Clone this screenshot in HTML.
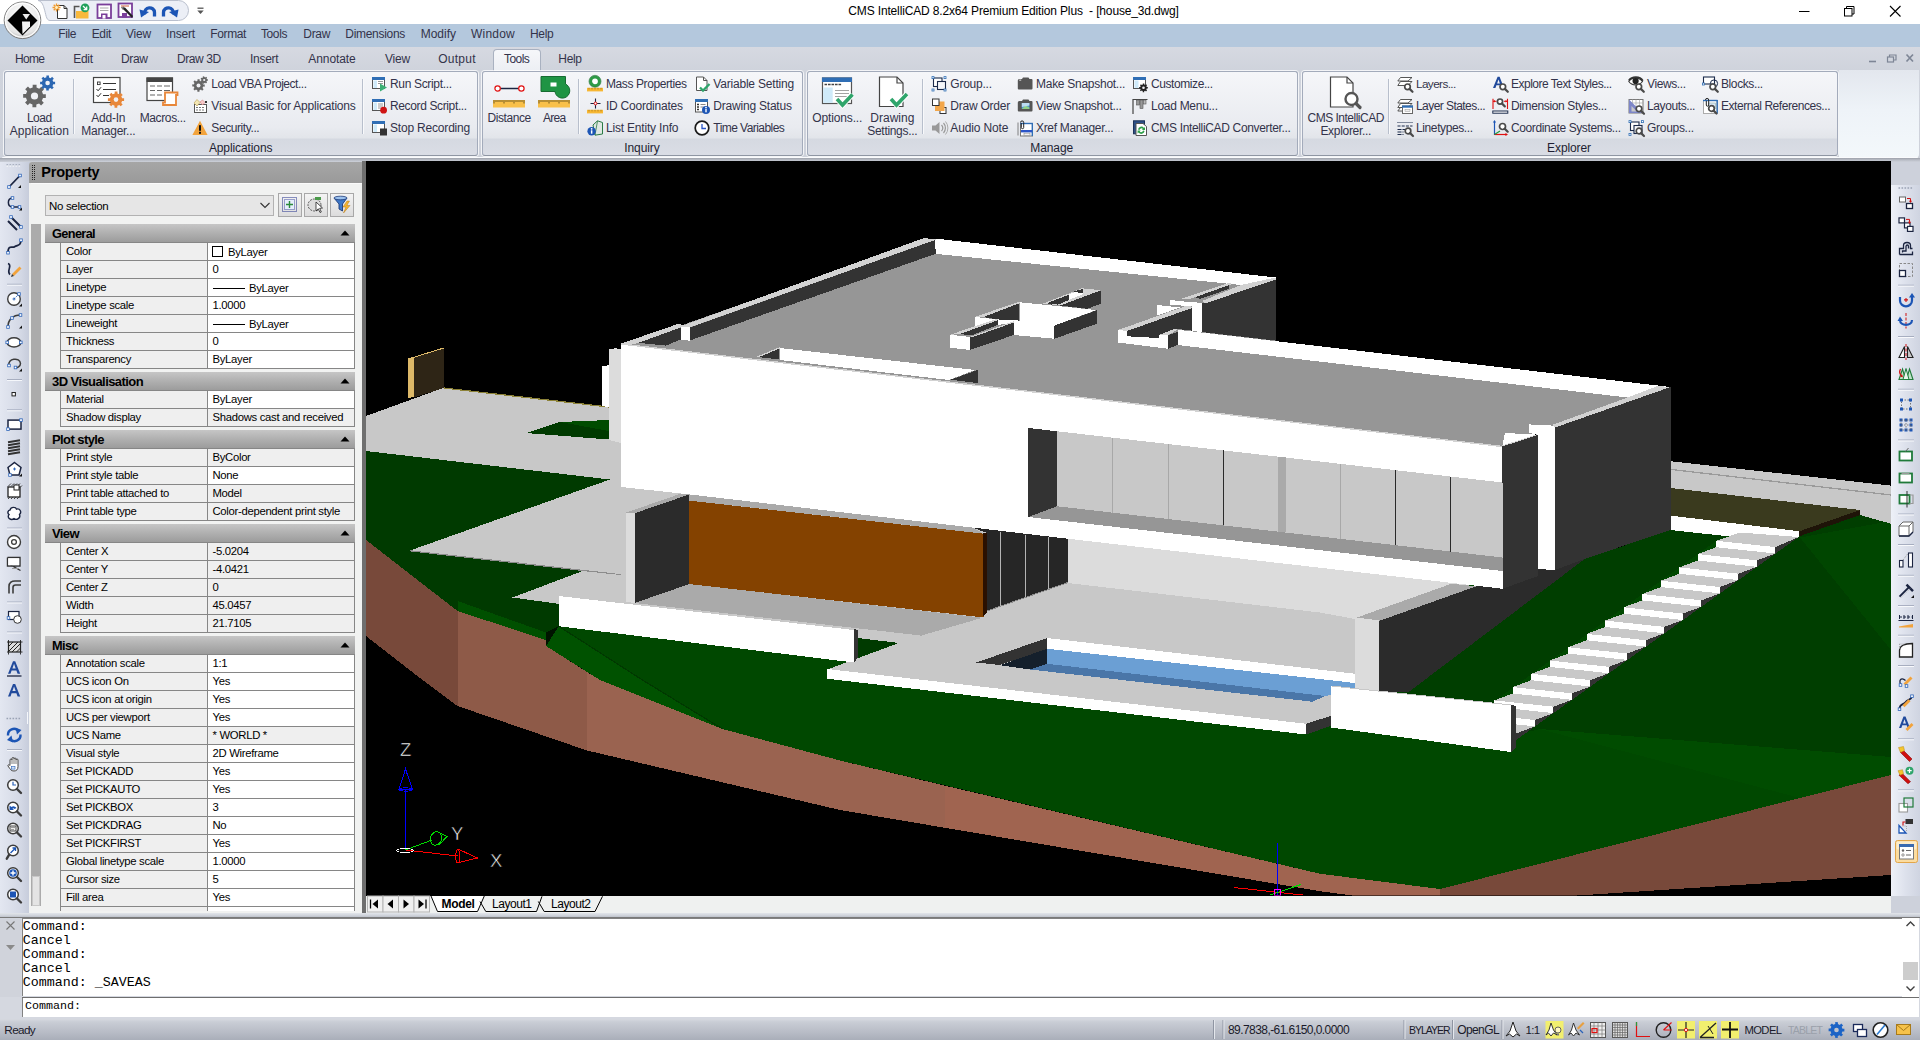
<!DOCTYPE html>
<html lang="en"><head><meta charset="utf-8"><title>CMS IntelliCAD 8.2x64 Premium Edition Plus - [house_3d.dwg]</title>
<style>
html,body{margin:0;padding:0}body{width:1920px;height:1040px;overflow:hidden;position:relative;background:#d0d4dd;font-family:"Liberation Sans",sans-serif}
body>div,body>svg,body>span{position:absolute}
div{box-sizing:content-box}
.t{white-space:pre;font-family:"Liberation Sans",sans-serif}
.b{font-weight:bold}
.m{font-family:"Liberation Mono",monospace}
.cn{font-family:"Liberation Mono",monospace}
svg{overflow:visible}
</style></head>
<body>
<div style="left:0px;top:0px;width:1920px;height:24px;background:#fff"></div>
<span class="t" style="left:848.3px;top:3.0px;font-size:12px;line-height:16px;color:#000;letter-spacing:-0.15px;">CMS IntelliCAD 8.2x64 Premium Edition Plus  - [house_3d.dwg]</span>
<div style="left:0px;top:24px;width:1920px;height:23px;background:#b4c8dd"></div>
<span class="t" style="left:58.3px;top:26.0px;font-size:12px;line-height:16px;color:#33334a;letter-spacing:-0.41px;">File</span>
<span class="t" style="left:91.7px;top:26.0px;font-size:12px;line-height:16px;color:#33334a;letter-spacing:-0.34px;">Edit</span>
<span class="t" style="left:126.0px;top:26.0px;font-size:12px;line-height:16px;color:#33334a;letter-spacing:-0.20px;">View</span>
<span class="t" style="left:166.0px;top:26.0px;font-size:12px;line-height:16px;color:#33334a;letter-spacing:-0.17px;">Insert</span>
<span class="t" style="left:210.3px;top:26.0px;font-size:12px;line-height:16px;color:#33334a;letter-spacing:-0.38px;">Format</span>
<span class="t" style="left:261.0px;top:26.0px;font-size:12px;line-height:16px;color:#33334a;letter-spacing:-0.40px;">Tools</span>
<span class="t" style="left:303.3px;top:26.0px;font-size:12px;line-height:16px;color:#33334a;letter-spacing:-0.33px;">Draw</span>
<span class="t" style="left:345.3px;top:26.0px;font-size:12px;line-height:16px;color:#33334a;letter-spacing:-0.30px;">Dimensions</span>
<span class="t" style="left:420.7px;top:26.0px;font-size:12px;line-height:16px;color:#33334a;">Modify</span>
<span class="t" style="left:471.0px;top:26.0px;font-size:12px;line-height:16px;color:#33334a;letter-spacing:0.22px;">Window</span>
<span class="t" style="left:530.0px;top:26.0px;font-size:12px;line-height:16px;color:#33334a;letter-spacing:-0.34px;">Help</span>
<div style="left:0px;top:47px;width:1920px;height:23px;background:linear-gradient(#d6d9e1,#cfd3dc)"></div>
<div style="left:0px;top:70px;width:1920px;height:92px;background:linear-gradient(#d0d4dd,#cdd1da)"></div>
<div style="left:492.5px;top:48.5px;width:48px;height:23px;background:linear-gradient(#f6f7fa,#eceef3);border:1px solid #a9b1c0;border-bottom:none;border-radius:4px 4px 0 0;box-sizing:border-box"></div>
<span class="t" style="left:15.0px;top:51.0px;font-size:12px;line-height:16px;color:#33334a;letter-spacing:-0.68px;">Home</span>
<span class="t" style="left:73.3px;top:51.0px;font-size:12px;line-height:16px;color:#33334a;letter-spacing:-0.32px;">Edit</span>
<span class="t" style="left:121.0px;top:51.0px;font-size:12px;line-height:16px;color:#33334a;letter-spacing:-0.33px;">Draw</span>
<span class="t" style="left:177.0px;top:51.0px;font-size:12px;line-height:16px;color:#33334a;letter-spacing:-0.42px;">Draw 3D</span>
<span class="t" style="left:250.0px;top:51.0px;font-size:12px;line-height:16px;color:#33334a;letter-spacing:-0.28px;">Insert</span>
<span class="t" style="left:308.3px;top:51.0px;font-size:12px;line-height:16px;color:#33334a;letter-spacing:-0.08px;">Annotate</span>
<span class="t" style="left:385.0px;top:51.0px;font-size:12px;line-height:16px;color:#33334a;letter-spacing:-0.20px;">View</span>
<span class="t" style="left:438.3px;top:51.0px;font-size:12px;line-height:16px;color:#33334a;letter-spacing:0.23px;">Output</span>
<span class="t" style="left:504.0px;top:51.0px;font-size:12px;line-height:16px;color:#33334a;letter-spacing:-0.54px;">Tools</span>
<span class="t" style="left:558.3px;top:51.0px;font-size:12px;line-height:16px;color:#33334a;letter-spacing:-0.32px;">Help</span>
<svg style="left:0;top:0" width="240" height="48" viewBox="0 0 240 48"><defs><radialGradient id="ab" cx=".5" cy=".35" r=".7"><stop offset="0" stop-color="#fff"/><stop offset=".75" stop-color="#e6e6e6"/><stop offset="1" stop-color="#9a9a9a"/></radialGradient></defs><path d="M38 0.5 H178.5 A 10 10 0 0 1 178.5 20.5 H50 C46 20.5 46 14 44 8 C43 4 41 1 38 0.5 Z" fill="#eceff6" stroke="#b9bfcd" stroke-width="1"/><circle cx="22.5" cy="20.3" r="18.3" fill="url(#ab)" stroke="#7d7d7d" stroke-width="1"/><circle cx="22.5" cy="20.3" r="17" fill="none" stroke="#fdfdfd" stroke-width="1.4" opacity=".9"/><path d="M22.5 5.5 L37.5 20.5 L22.5 35.5 L7.5 20.5 Z" fill="#000"/><path d="M22 21.5 H30 V26.5 L22.5 34 Z" fill="#f4f4f4"/><path d="M22.5 14 H30 L26.2 19.5 Z" fill="#e8e8e8"/><g transform="translate(52,3)"><path d="M5.5 2.5 H12 L15 5.5 V15.5 H5.5 Z" fill="#fff" stroke="#333" stroke-width="1"/><path d="M12 2.5V5.5H15" fill="none" stroke="#333"/><g stroke="#f29a2e" stroke-width="1.3"><path d="M4.5 0.5v8M0.5 4.5h8M1.7 1.7l5.6 5.6M7.3 1.7l-5.6 5.6"/></g><circle cx="4.5" cy="4.5" r="1.4" fill="#fff3c4"/></g><g transform="translate(73,3)"><path d="M1.5 15V3.5H6.5" fill="none" stroke="#555" stroke-width="1.6"/><path d="M3 8 H15.5 V15.5 H3 Z" fill="#f9b93c"/><circle cx="12" cy="4.8" r="4.4" fill="#1fa05a"/><path d="M10 3 L13.5 6.5 M13.7 3.6 V6.7 H10.6" stroke="#fff" stroke-width="1.3" fill="none"/></g><g transform="translate(96,3)"><rect x="1.5" y="1.5" width="13.5" height="13.5" fill="#fff" stroke="#7a3f9a" stroke-width="1.8"/><path d="M4 5h8.5M4 7.5h8.5" stroke="#aaa" stroke-width="1"/><rect x="5" y="10.5" width="6.5" height="5" fill="#7a3f9a"/><rect x="6.5" y="12" width="3" height="3.6" fill="#fff"/></g><g transform="translate(117,2)"><rect x="1.5" y="1.5" width="13.5" height="13.5" fill="#fff" stroke="#7a3f9a" stroke-width="1.8"/><path d="M4 4h8" stroke="#d0603a" stroke-width="1"/><rect x="5" y="11" width="5" height="4.6" fill="#7a3f9a"/><path d="M5 6 L13.5 14.5 L15 16 L16 14 L8 5.5 Z" fill="#222"/><path d="M4.5 5.5 L7 5 L6 7.5Z" fill="#ddd" stroke="#222" stroke-width=".6"/></g><g transform="translate(139.5,4)"><path d="M5 10.5 C4 2 15 2 15 8.5 V12.500" fill="none" stroke="#1c55b5" stroke-width="3.300"/><path d="M0 5.5 L9.5 8 L1.500 13.500 Z" fill="#1c55b5"/></g><g transform="translate(178.5,4) scale(-1,1)"><path d="M5 10.5 C4 2 15 2 15 8.5 V12.500" fill="none" stroke="#1c55b5" stroke-width="3.300"/><path d="M0 5.5 L9.5 8 L1.500 13.500 Z" fill="#1c55b5"/></g><path d="M197.5 8.2h6" stroke="#555" stroke-width="1.3"/><path d="M197.3 10.5h6.4l-3.2 3.4Z" fill="#555"/></svg>
<svg style="left:1780px;top:0" width="140" height="70" viewBox="1780 0 140 70"><path d="M1799 11.5h10.5" stroke="#000" stroke-width="1"/><rect x="1844.5" y="8.5" width="7.5" height="7.5" fill="#fff" stroke="#000" stroke-width="1"/><path d="M1846.5 8.5V6.5H1854V14H1852" fill="none" stroke="#000" stroke-width="1"/><path d="M1890 6 L1900.5 16.5 M1900.5 6 L1890 16.5" stroke="#000" stroke-width="1.1"/><path d="M1869 61.5h7" stroke="#7e8696" stroke-width="1.6"/><rect x="1887.5" y="57" width="6" height="5" fill="none" stroke="#7e8696" stroke-width="1.2"/><path d="M1889.5 57V55H1896V60H1894" fill="none" stroke="#7e8696" stroke-width="1.2"/><path d="M1906.5 54.5 L1913 61.5 M1913 54.5 L1906.5 61.5" stroke="#7e8696" stroke-width="1.7"/></svg>
<div style="left:4px;top:70.5px;width:473.5px;height:85px;box-sizing:border-box;border:1px solid #a3abbb;border-bottom-color:#8f96a3;border-radius:3px;background:linear-gradient(#f5f6f9 0,#e9ebf0 55px,#e2e5ea 66px,#d5d9e1 67px,#dadde5 100%);box-shadow:0 0 0 1px rgba(255,255,255,.75)"></div>
<span class="t" style="left:208.9px;top:139.7px;font-size:12px;line-height:16px;color:#1e1e32;letter-spacing:-0.10px;">Applications</span>
<svg style="left:23px;top:75.5px" width="32" height="33" viewBox="0 0 32 33"><polygon points="20.04,18.16 22.86,18.20 22.81,22.07 20.00,22.04 18.84,24.74 20.80,26.76 18.04,29.46 16.07,27.45 13.34,28.54 13.30,31.36 9.43,31.31 9.46,28.50 6.76,27.34 4.74,29.30 2.04,26.54 4.05,24.57 2.96,21.84 0.14,21.80 0.19,17.93 3.00,17.96 4.16,15.26 2.20,13.24 4.96,10.54 6.93,12.55 9.66,11.46 9.70,8.64 13.57,8.69 13.54,11.50 16.24,12.66 18.26,10.70 20.96,13.46 18.95,15.43" fill="#666"/><circle cx="11.5" cy="20" r="3.6" fill="#f0f1f5"/><polygon points="30.25,5.78 32.11,5.81 32.08,8.37 30.22,8.35 29.45,10.13 30.75,11.47 28.92,13.25 27.62,11.92 25.82,12.65 25.79,14.51 23.23,14.48 23.25,12.62 21.47,11.85 20.13,13.15 18.35,11.32 19.68,10.02 18.95,8.22 17.09,8.19 17.12,5.63 18.98,5.65 19.75,3.87 18.45,2.53 20.28,0.75 21.58,2.08 23.38,1.35 23.41,-0.51 25.97,-0.48 25.95,1.38 27.73,2.15 29.07,0.85 30.85,2.68 29.52,3.98" fill="#2c67b2"/><circle cx="24.6" cy="7" r="2.3" fill="#f0f1f5"/></svg>
<span class="t" style="left:26.9px;top:110.0px;font-size:12px;line-height:16px;color:#33334a;letter-spacing:-0.50px;">Load</span>
<span class="t" style="left:9.8px;top:123.0px;font-size:12px;line-height:16px;color:#33334a;letter-spacing:0.03px;">Application</span>
<div style="left:72.8px;top:79px;width:1px;height:55px;background:#b8bfcc"></div>
<div style="left:73.8px;top:79px;width:1px;height:55px;background:#f8f9fb"></div>
<svg style="left:92px;top:75.5px" width="32" height="33" viewBox="0 0 32 33"><rect x="1.5" y="1.5" width="26.5" height="25" fill="#fff" stroke="#444" stroke-width="1.2"/><rect x="5.5" y="6" width="2.6" height="2.6" fill="#fff" stroke="#333" stroke-width=".9"/><path d="M11 7.5h13M11 13.5h13M11 19.5h6" stroke="#333" stroke-width="1.1"/><path d="M4.5 13l1.6 1.8 3-3.6M4.5 19l1.6 1.8 3-3.6" fill="none" stroke="#333" stroke-width="1"/><polygon points="30.09,22.29 32.10,22.32 32.07,25.07 30.06,25.05 29.24,26.98 30.63,28.42 28.66,30.35 27.26,28.91 25.31,29.69 25.28,31.70 22.53,31.67 22.55,29.66 20.62,28.84 19.18,30.23 17.25,28.26 18.69,26.86 17.91,24.91 15.90,24.88 15.93,22.13 17.94,22.15 18.76,20.22 17.37,18.78 19.34,16.85 20.74,18.29 22.69,17.51 22.72,15.50 25.47,15.53 25.45,17.54 27.38,18.36 28.82,16.97 30.75,18.94 29.31,20.34" fill="#e8873a"/><circle cx="24" cy="23.6" r="2.3" fill="#f0f1f5"/></svg>
<span class="t" style="left:91.3px;top:110.0px;font-size:12px;line-height:16px;color:#33334a;letter-spacing:-0.23px;">Add-In</span>
<span class="t" style="left:81.3px;top:123.0px;font-size:12px;line-height:16px;color:#33334a;letter-spacing:-0.27px;">Manager...</span>
<svg style="left:146.4px;top:75.5px" width="32" height="33" viewBox="0 0 32 33"><rect x="1" y="2" width="25.5" height="22.5" fill="#fff" stroke="#444" stroke-width="1.2"/><rect x="0.5" y="1.5" width="26.5" height="4.5" fill="#444"/><path d="M4 10h5M11 10h5M18 10h6M4 14.5h5M11 14.5h5M18 14.5h6M4 19h5M11 19h5M18 19h3" stroke="#666" stroke-width="1.1"/><path d="M19 16.5 H31.5 V19 H30 V29 H17 V26.5 H19 Z" fill="#fff" stroke="#e8873a" stroke-width="1.8"/></svg>
<span class="t" style="left:139.7px;top:110.0px;font-size:12px;line-height:16px;color:#33334a;letter-spacing:-0.37px;">Macros...</span>
<svg style="left:192px;top:75.5px" width="16" height="16" viewBox="0 0 16 16"><polygon points="11.18,8.49 12.72,8.51 12.70,10.63 11.16,10.62 10.52,12.10 11.60,13.20 10.08,14.68 9.00,13.58 7.51,14.18 7.49,15.72 5.37,15.70 5.38,14.16 3.90,13.52 2.80,14.60 1.32,13.08 2.42,12.00 1.82,10.51 0.28,10.49 0.30,8.37 1.84,8.38 2.48,6.90 1.40,5.80 2.92,4.32 4.00,5.42 5.49,4.82 5.51,3.28 7.63,3.30 7.62,4.84 9.10,5.48 10.20,4.40 11.68,5.92 10.58,7.00" fill="#666"/><circle cx="6.5" cy="9.5" r="2" fill="#f0f1f5"/><polygon points="15.00,3.31 15.94,3.32 15.92,4.78 14.98,4.77 14.49,5.76 15.06,6.50 13.91,7.39 13.34,6.66 12.25,6.89 12.03,7.80 10.61,7.45 10.83,6.54 9.97,5.84 9.13,6.23 8.51,4.91 9.36,4.52 9.37,3.41 8.54,2.99 9.19,1.68 10.03,2.10 10.90,1.42 10.71,0.51 12.13,0.20 12.33,1.11 13.41,1.38 14.00,0.65 15.13,1.58 14.54,2.30" fill="#666"/><circle cx="12.2" cy="4" r="1.1" fill="#f0f1f5"/></svg>
<span class="t" style="left:211.3px;top:76.0px;font-size:12px;line-height:16px;color:#33334a;letter-spacing:-0.46px;">Load VBA Project...</span>
<svg style="left:192px;top:97.5px" width="16" height="16" viewBox="0 0 16 16"><rect x="2.5" y="6.5" width="12" height="8" fill="#fff" stroke="#555"/><path d="M4 9.5h9M4 12h9" stroke="#777" stroke-dasharray="2 1"/><path d="M2 5 L5 1.5 L8 4.5 L5 8 Z" fill="#f3e7b5" stroke="#b89b46" stroke-width=".6"/><path d="M8 4 L10.5 2 L13 4.5 L10.5 7 Z" fill="#f7c9c9" stroke="#d47d7d" stroke-width=".6"/><rect x="13" y="3" width="2" height="2" fill="#333"/></svg>
<span class="t" style="left:211.3px;top:98.0px;font-size:12px;line-height:16px;color:#33334a;letter-spacing:-0.19px;">Visual Basic for Applications</span>
<svg style="left:192px;top:119.5px" width="16" height="16" viewBox="0 0 16 16"><path d="M8 0.8 L15.6 15 L0.4 15 Z" fill="#f2a33c"/><rect x="7" y="5.2" width="2" height="5.6" fill="#111"/><rect x="7" y="11.8" width="2" height="2" fill="#111"/></svg>
<span class="t" style="left:211.3px;top:120.0px;font-size:12px;line-height:16px;color:#33334a;letter-spacing:-0.41px;">Security...</span>
<div style="left:362.2px;top:79px;width:1px;height:55px;background:#b8bfcc"></div>
<div style="left:363.2px;top:79px;width:1px;height:55px;background:#f8f9fb"></div>
<svg style="left:370.7px;top:75.5px" width="16" height="16" viewBox="0 0 16 16"><rect x="1.5" y="1.5" width="12" height="11" fill="#fff" stroke="#555" stroke-width="1"/><rect x="1" y="1" width="13" height="3" fill="#2f6eb5"/><rect x="2.5" y="4.5" width="3.5" height="7.5" fill="#cfeaf9"/><path d="M7 5.5h5M7 7.5h5" stroke="#999"/><path d="M9 7.5 L16 11.5 L9 15.5 Z" fill="#3caf74"/></svg>
<span class="t" style="left:390.0px;top:76.0px;font-size:12px;line-height:16px;color:#33334a;letter-spacing:-0.33px;">Run Script...</span>
<svg style="left:370.7px;top:97.5px" width="16" height="16" viewBox="0 0 16 16"><rect x="1.5" y="1.5" width="12" height="11" fill="#fff" stroke="#555" stroke-width="1"/><rect x="1" y="1" width="13" height="3" fill="#2f6eb5"/><rect x="2.5" y="4.5" width="3.5" height="7.5" fill="#cfeaf9"/><path d="M7 6h5M7 8h5M7 10h3" stroke="#999"/><circle cx="12.6" cy="12.2" r="3.4" fill="#cf1414"/></svg>
<span class="t" style="left:390.0px;top:98.0px;font-size:12px;line-height:16px;color:#33334a;letter-spacing:-0.37px;">Record Script...</span>
<svg style="left:370.7px;top:119.5px" width="16" height="16" viewBox="0 0 16 16"><rect x="1.5" y="1.5" width="12" height="11" fill="#fff" stroke="#555" stroke-width="1"/><rect x="1" y="1" width="13" height="3" fill="#2f6eb5"/><rect x="2.5" y="4.5" width="3.5" height="7.5" fill="#cfeaf9"/><rect x="9" y="8.5" width="7" height="7" fill="#333"/></svg>
<span class="t" style="left:390.0px;top:120.0px;font-size:12px;line-height:16px;color:#33334a;letter-spacing:-0.19px;">Stop Recording</span>
<div style="left:481.5px;top:70.5px;width:321px;height:85px;box-sizing:border-box;border:1px solid #a3abbb;border-bottom-color:#8f96a3;border-radius:3px;background:linear-gradient(#f5f6f9 0,#e9ebf0 55px,#e2e5ea 66px,#d5d9e1 67px,#dadde5 100%);box-shadow:0 0 0 1px rgba(255,255,255,.75)"></div>
<span class="t" style="left:624.3px;top:139.7px;font-size:12px;line-height:16px;color:#1e1e32;letter-spacing:-0.10px;">Inquiry</span>
<svg style="left:492.7px;top:75.5px" width="32" height="33" viewBox="0 0 32 33"><path d="M5 12.5h22" stroke="#1b2440" stroke-width="1.5"/><circle cx="4.6" cy="12.5" r="2.7" fill="#fff" stroke="#e01010" stroke-width="1.2"/><circle cx="28.4" cy="12.5" r="2.7" fill="#fff" stroke="#e01010" stroke-width="1.2"/><rect x="0" y="24" width="32" height="7.5" fill="#f9c04a"/><path d="M1 24v3.5M3 24v2M5 24v2M7 24v2M9 24v2M11 24v3.5M13 24v2M15 24v2M17 24v2M19 24v2M21 24v3.5M23 24v2M25 24v2M27 24v2M29 24v2M31 24v3.5" stroke="#3a3010" stroke-width=".7"/></svg>
<span class="t" style="left:487.4px;top:110.0px;font-size:12px;line-height:16px;color:#33334a;letter-spacing:-0.42px;">Distance</span>
<svg style="left:538px;top:75.5px" width="32" height="33" viewBox="0 0 32 33"><path d="M3 0.5 H27.5 V8 A7.4 7.4 0 1 1 17 15.5 H3 Z" fill="#1f9444" stroke="#166b31" stroke-width="1"/><rect x="12.5" y="6.5" width="6" height="4" fill="#fff"/><rect x="0" y="24" width="32" height="7.5" fill="#f9c04a"/><path d="M1 24v3.5M3 24v2M5 24v2M7 24v2M9 24v2M11 24v3.5M13 24v2M15 24v2M17 24v2M19 24v2M21 24v3.5M23 24v2M25 24v2M27 24v2M29 24v2M31 24v3.5" stroke="#3a3010" stroke-width=".7"/></svg>
<span class="t" style="left:543.1px;top:110.0px;font-size:12px;line-height:16px;color:#33334a;letter-spacing:-0.76px;">Area</span>
<div style="left:577.8px;top:79px;width:1px;height:55px;background:#b8bfcc"></div>
<div style="left:578.8px;top:79px;width:1px;height:55px;background:#f8f9fb"></div>
<svg style="left:587px;top:75.5px" width="16" height="16" viewBox="0 0 16 16"><circle cx="8" cy="5.3" r="4.4" fill="#fff" stroke="#2e9a46" stroke-width="3"/><circle cx="8" cy="5.3" r="6" fill="none" stroke="#1f6e32" stroke-width=".6"/><rect x="0" y="11.8" width="16" height="3.6" fill="#f7b733"/><path d="M2 11.8v1.6M5 11.8v1.6M8 11.8v1.6M11 11.8v1.6M14 11.8v1.6" stroke="#8a6514" stroke-width=".6"/></svg>
<span class="t" style="left:606.0px;top:76.0px;font-size:12px;line-height:16px;color:#33334a;letter-spacing:-0.40px;">Mass Properties</span>
<svg style="left:587px;top:97.5px" width="16" height="16" viewBox="0 0 16 16"><path d="M8.5 0.5v10M3.5 5.5h10" stroke="#1b2440" stroke-width="1.1"/><circle cx="8.5" cy="5.5" r="1.4" fill="#fff" stroke="#e01010"/><rect x="0" y="11.8" width="16" height="3.6" fill="#f7b733"/><path d="M2 11.8v1.6M5 11.8v1.6M8 11.8v1.6M11 11.8v1.6M14 11.8v1.6" stroke="#8a6514" stroke-width=".6"/></svg>
<span class="t" style="left:606.0px;top:98.0px;font-size:12px;line-height:16px;color:#33334a;letter-spacing:-0.24px;">ID Coordinates</span>
<svg style="left:587px;top:119.5px" width="16" height="16" viewBox="0 0 16 16"><path d="M6 5 L10.5 0.8 L15.5 2.5 L15.5 14 L8 15.2 Z" fill="#dfe8e2" stroke="#2b7a45" stroke-width="1"/><path d="M10.5 1 L8 15" stroke="#2b7a45" stroke-width=".8"/><circle cx="4.6" cy="11.3" r="4.2" fill="#1c55b5"/><rect x="3.9" y="10.3" width="1.5" height="3.4" fill="#fff"/><circle cx="4.65" cy="8.8" r=".9" fill="#fff"/></svg>
<span class="t" style="left:606.0px;top:120.0px;font-size:12px;line-height:16px;color:#33334a;letter-spacing:-0.19px;">List Entity Info</span>
<svg style="left:694px;top:75.5px" width="16" height="16" viewBox="0 0 16 16"><path d="M2.5 1 H9.5 L13 4.5 V14.5 H2.5 Z" fill="#fff" stroke="#555"/><path d="M9.5 1 V4.5 H13" fill="none" stroke="#555"/><path d="M6 11.5 L9 14.5 L15.5 8" fill="none" stroke="#2fa56b" stroke-width="2.3"/></svg>
<span class="t" style="left:713.3px;top:76.0px;font-size:12px;line-height:16px;color:#33334a;letter-spacing:-0.20px;">Variable Setting</span>
<svg style="left:694px;top:97.5px" width="16" height="16" viewBox="0 0 16 16"><rect x="1.5" y="1.5" width="12" height="12.5" fill="#fff" stroke="#555"/><rect x="1" y="1" width="13" height="3" fill="#2f6eb5"/><path d="M3 6.5h2M3 9h2M3 11.5h2" stroke="#333" stroke-width="1.3"/><path d="M6.5 6.5h5M6.5 9h3" stroke="#888"/><circle cx="12" cy="12" r="4" fill="#1c55b5"/><rect x="11.3" y="11" width="1.4" height="3.3" fill="#fff"/><circle cx="12" cy="9.6" r=".9" fill="#fff"/></svg>
<span class="t" style="left:713.3px;top:98.0px;font-size:12px;line-height:16px;color:#33334a;letter-spacing:-0.21px;">Drawing Status</span>
<svg style="left:694px;top:119.5px" width="16" height="16" viewBox="0 0 16 16"><circle cx="8" cy="8" r="6.8" fill="#fff" stroke="#1a1a1a" stroke-width="1.7"/><path d="M8 4v4.5h4" fill="none" stroke="#2a56c6" stroke-width="1.3"/></svg>
<span class="t" style="left:713.3px;top:120.0px;font-size:12px;line-height:16px;color:#33334a;letter-spacing:-0.55px;">Time Variables</span>
<div style="left:806.5px;top:70.5px;width:491px;height:85px;box-sizing:border-box;border:1px solid #a3abbb;border-bottom-color:#8f96a3;border-radius:3px;background:linear-gradient(#f5f6f9 0,#e9ebf0 55px,#e2e5ea 66px,#d5d9e1 67px,#dadde5 100%);box-shadow:0 0 0 1px rgba(255,255,255,.75)"></div>
<span class="t" style="left:1030.3px;top:139.7px;font-size:12px;line-height:16px;color:#1e1e32;letter-spacing:-0.10px;">Manage</span>
<svg style="left:821px;top:75.5px" width="32" height="33" viewBox="0 0 32 33"><rect x="1.5" y="2" width="29" height="25.5" fill="#fff" stroke="#555" stroke-width="1.2"/><rect x="1" y="1.5" width="30" height="4.5" fill="#2f6eb5"/><path d="M3.5 8.5h2.6M7 8.5h2.6M10.5 8.5h2.6M14 8.5h2.6M17.5 8.5h2.6" stroke="#444" stroke-width="1.6"/><rect x="2.2" y="11.5" width="9.5" height="15.4" fill="#cfeaf9"/><path d="M14 14.5h14M14 17.5h14M14 20.5h14" stroke="#999" stroke-width=".9"/><path d="M16 23 L21.5 29 L31.5 18.5" fill="none" stroke="#fff" stroke-width="5.5"/><path d="M16 23 L21.5 29 L31.5 18.5" fill="none" stroke="#2fa56b" stroke-width="3.6"/></svg>
<span class="t" style="left:812.3px;top:110.0px;font-size:12px;line-height:16px;color:#33334a;letter-spacing:-0.14px;">Options...</span>
<svg style="left:876px;top:75.5px" width="32" height="33" viewBox="0 0 32 33"><path d="M3.5 1 H21 L27 7 V30.5 H3.5 Z" fill="#fff" stroke="#444" stroke-width="1.2"/><path d="M21 1 V7 H27" fill="none" stroke="#444" stroke-width="1.2"/><path d="M15 23 L20.5 29 L31 18" fill="none" stroke="#fff" stroke-width="5.5"/><path d="M15 23 L20.5 29 L31 18" fill="none" stroke="#2fa56b" stroke-width="3.6"/></svg>
<span class="t" style="left:870.3px;top:110.0px;font-size:12px;line-height:16px;color:#33334a;">Drawing</span>
<span class="t" style="left:867.3px;top:123.0px;font-size:12px;line-height:16px;color:#33334a;letter-spacing:-0.31px;">Settings...</span>
<div style="left:922.2px;top:79px;width:1px;height:55px;background:#b8bfcc"></div>
<div style="left:923.2px;top:79px;width:1px;height:55px;background:#f8f9fb"></div>
<svg style="left:931px;top:75.5px" width="16" height="16" viewBox="0 0 16 16"><rect x="2.5" y="2" width="8.5" height="8.5" fill="#fff" stroke="#1b2a4a" stroke-width="1.1"/><rect x="6.5" y="5.5" width="8" height="8" fill="#f4f6fa" stroke="#1b2a4a" stroke-width="1.1"/><g fill="#fff" stroke="#2f6eb5" stroke-width=".8"><rect x="1" y="0.6" width="2" height="2"/><rect x="13" y="0.6" width="2" height="2"/><rect x="1" y="13" width="2" height="2"/><rect x="13" y="13" width="2" height="2"/></g></svg>
<span class="t" style="left:950.3px;top:76.0px;font-size:12px;line-height:16px;color:#33334a;letter-spacing:-0.24px;">Group...</span>
<svg style="left:931px;top:97.5px" width="16" height="16" viewBox="0 0 16 16"><rect x="9" y="9.5" width="6" height="6" fill="#fff" stroke="#333"/><rect x="4" y="3.5" width="9.5" height="9.5" fill="#f2a64a"/><rect x="1.5" y="1" width="6.5" height="6.5" fill="#fff" stroke="#333"/></svg>
<span class="t" style="left:950.3px;top:98.0px;font-size:12px;line-height:16px;color:#33334a;letter-spacing:-0.23px;">Draw Order</span>
<svg style="left:931px;top:119.5px" width="16" height="16" viewBox="0 0 16 16"><path d="M1 5.5h3.5L8.5 2v12L4.5 10.5H1Z" fill="#999"/><path d="M10.5 5a4.5 4.5 0 0 1 0 6M12.5 3a7.5 7.5 0 0 1 0 10" fill="none" stroke="#999" stroke-width="1.2"/><path d="M14.5 1.5a10 10 0 0 1 0 13" fill="none" stroke="#aaa" stroke-width="1"/></svg>
<span class="t" style="left:950.3px;top:120.0px;font-size:12px;line-height:16px;color:#33334a;letter-spacing:-0.14px;">Audio Note</span>
<svg style="left:1017px;top:75.5px" width="16" height="16" viewBox="0 0 16 16"><path d="M0.8 4.5 a1.5 1.5 0 0 1 1.5 -1.5 H5 L6 1.5 H11.5 L12.5 3 H14.5 a1 1 0 0 1 1 1 V12.5 a1 1 0 0 1 -1 1 H1.8 a1 1 0 0 1 -1 -1 Z" fill="#555"/><rect x="2.2" y="3.6" width="2" height="1" fill="#e8e8e8"/></svg>
<span class="t" style="left:1036.0px;top:76.0px;font-size:12px;line-height:16px;color:#33334a;letter-spacing:-0.27px;">Make Snapshot...</span>
<svg style="left:1017px;top:97.5px" width="16" height="16" viewBox="0 0 16 16"><path d="M0.8 4.5 a1.5 1.5 0 0 1 1.5 -1.5 H5 L6 1.5 H11.5 L12.5 3 H14.5 a1 1 0 0 1 1 1 V12.5 a1 1 0 0 1 -1 1 H1.8 a1 1 0 0 1 -1 -1 Z" fill="#555"/><rect x="4.8" y="5" width="7.6" height="6" fill="#4c9bd6"/><path d="M4.8 11 L8.5 7.5 L12.4 9.5 V11Z" fill="#8fd08a"/><path d="M4.8 5h7.6v2.5L4.8 9Z" fill="#d7ecfa" opacity=".8"/></svg>
<span class="t" style="left:1036.0px;top:98.0px;font-size:12px;line-height:16px;color:#33334a;letter-spacing:-0.26px;">View Snapshot...</span>
<svg style="left:1017px;top:119.5px" width="16" height="16" viewBox="0 0 16 16"><rect x="3.5" y="3.5" width="12" height="12.5" fill="#fff" stroke="#777"/><path d="M3 3.5h13" stroke="#2f6eb5" stroke-width="1.4"/><path d="M15.3 3v13" stroke="#2f6eb5" stroke-width="1.4"/><rect x="4" y="10" width="11" height="2.4" fill="#2b55c8"/><rect x="7" y="13.2" width="6" height="2" fill="#fff" stroke="#888" stroke-width=".6"/><path d="M3.5 2.5 a1.6 1.6 0 0 1 3.2 0 V7.5 a1.2 1.2 0 0 1 -2.4 0 V3" fill="none" stroke="#222" stroke-width="1"/><path d="M1 2.5v13" stroke="#666" stroke-width=".8"/></svg>
<span class="t" style="left:1036.0px;top:120.0px;font-size:12px;line-height:16px;color:#33334a;letter-spacing:-0.32px;">Xref Manager...</span>
<svg style="left:1131.5px;top:75.5px" width="16" height="16" viewBox="0 0 16 16"><rect x="1.5" y="1.5" width="12" height="11" fill="#fff" stroke="#555"/><rect x="1" y="1" width="13" height="3" fill="#2f6eb5"/><rect x="2.5" y="4.5" width="4" height="7.5" fill="#cfeaf9"/><polygon points="14.77,11.10 15.85,11.11 15.83,12.59 14.75,12.58 14.31,13.61 15.06,14.39 14.00,15.42 13.25,14.65 12.20,15.07 12.19,16.15 10.71,16.13 10.72,15.05 9.69,14.61 8.91,15.36 7.88,14.30 8.65,13.55 8.23,12.50 7.15,12.49 7.17,11.01 8.25,11.02 8.69,9.99 7.94,9.21 9.00,8.18 9.75,8.95 10.80,8.53 10.81,7.45 12.29,7.47 12.28,8.55 13.31,8.99 14.09,8.24 15.12,9.30 14.35,10.05" fill="#222"/><circle cx="11.5" cy="11.8" r="1.3" fill="#f0f1f5"/></svg>
<span class="t" style="left:1151.0px;top:76.0px;font-size:12px;line-height:16px;color:#33334a;letter-spacing:-0.42px;">Customize...</span>
<svg style="left:1131.5px;top:97.5px" width="16" height="16" viewBox="0 0 16 16"><path d="M1 16V1.5H15.5" fill="none" stroke="#444" stroke-width="1.2"/><rect x="4.5" y="2" width="3" height="5" fill="#999" stroke="#555" stroke-width=".6"/><rect x="8" y="2" width="3" height="8.5" fill="#999" stroke="#555" stroke-width=".6"/><rect x="11.5" y="2" width="2.5" height="4" fill="#bbb" stroke="#555" stroke-width=".6"/></svg>
<span class="t" style="left:1151.0px;top:98.0px;font-size:12px;line-height:16px;color:#33334a;letter-spacing:-0.28px;">Load Menu...</span>
<svg style="left:1131.5px;top:119.5px" width="16" height="16" viewBox="0 0 16 16"><rect x="1.5" y="0.8" width="11" height="13" fill="#2d4f86" stroke="#1d3358"/><path d="M4 3.5 H11 L14.5 6.5 V15.5 H4 Z" fill="#fff" stroke="#555"/><path d="M6 9.5 a3.4 3.4 0 0 1 6 -1.6 l1 -1 v3.2 h-3.2 l1.1 -1.1 a2 2 0 0 0 -3.4 .9Z" fill="#2fa04a"/><path d="M12.6 11 a3.4 3.4 0 0 1 -6 1.6 l-1 1 v-3.2 h3.2 l-1.1 1.1 a2 2 0 0 0 3.4 -.9Z" fill="#2fa04a"/></svg>
<span class="t" style="left:1151.0px;top:120.0px;font-size:12px;line-height:16px;color:#33334a;letter-spacing:-0.34px;">CMS IntelliCAD Converter...</span>
<div style="left:1301.5px;top:70.5px;width:536px;height:85px;box-sizing:border-box;border:1px solid #a3abbb;border-bottom-color:#8f96a3;border-radius:3px;background:linear-gradient(#f5f6f9 0,#e9ebf0 55px,#e2e5ea 66px,#d5d9e1 67px,#dadde5 100%);box-shadow:0 0 0 1px rgba(255,255,255,.75)"></div>
<span class="t" style="left:1547.1px;top:139.7px;font-size:12px;line-height:16px;color:#1e1e32;letter-spacing:-0.10px;">Explorer</span>
<svg style="left:1329.4px;top:75.5px" width="32" height="33" viewBox="0 0 32 33"><path d="M1.5 1 H18 L24 7 V31 H1.5 Z" fill="#fff" stroke="#444" stroke-width="1.2"/><path d="M18 1 V7 H24" fill="none" stroke="#444" stroke-width="1.2"/><circle cx="22.5" cy="23" r="6" fill="#fff" stroke="#555" stroke-width="2.4"/><path d="M27 27.5 L31 31.5" stroke="#555" stroke-width="3.2" stroke-linecap="round"/></svg>
<span class="t" style="left:1307.5px;top:110.0px;font-size:12px;line-height:16px;color:#33334a;letter-spacing:-0.50px;">CMS IntelliCAD</span>
<span class="t" style="left:1320.4px;top:123.0px;font-size:12px;line-height:16px;color:#33334a;letter-spacing:-0.30px;">Explorer...</span>
<div style="left:1387.8px;top:79px;width:1px;height:55px;background:#b8bfcc"></div>
<div style="left:1388.8px;top:79px;width:1px;height:55px;background:#f8f9fb"></div>
<svg style="left:1397px;top:75.5px" width="16" height="16" viewBox="0 0 16 16"><path d="M3.5 1.5 H15 L11 5 H0.8 Z" fill="#fff" stroke="#444" stroke-width=".9"/><path d="M3.5 5.5 H15 L11 9.5 H0.8 Z" fill="#fff" stroke="#444" stroke-width=".9"/><circle cx="10.5" cy="10.8" r="2.8" fill="#fff" stroke="#4a4a4a" stroke-width="1.7"/><path d="M12.6 12.9 L15.5 15.8" stroke="#4a4a4a" stroke-width="2.2" stroke-linecap="round"/></svg>
<span class="t" style="left:1416.0px;top:76.0px;font-size:11.75px;line-height:16px;color:#33334a;letter-spacing:-0.60px;">Layers...</span>
<svg style="left:1397px;top:97.5px" width="16" height="16" viewBox="0 0 16 16"><path d="M3.5 1.5 H15 L11 5 H0.8 Z" fill="#fff" stroke="#444" stroke-width=".9"/><path d="M3.5 5.5 H15 L11 9.5 H0.8 Z" fill="#fff" stroke="#444" stroke-width=".9"/><path d="M3.5 9.5 H8 L6 13 H0.8 Z" fill="#fff" stroke="#444" stroke-width=".9"/><rect x="5.5" y="8" width="10" height="7.5" fill="#fff" stroke="#666"/><rect x="5" y="7.5" width="11" height="2.2" fill="#2f6eb5"/><rect x="8" y="11.3" width="5" height="2.2" fill="#eee" stroke="#999" stroke-width=".5"/></svg>
<span class="t" style="left:1416.0px;top:98.0px;font-size:12px;line-height:16px;color:#33334a;letter-spacing:-0.56px;">Layer States...</span>
<svg style="left:1397px;top:119.5px" width="16" height="16" viewBox="0 0 16 16"><path d="M0.5 2.5h15" stroke="#1b2a4a" stroke-width="1" stroke-dasharray="1 1"/><path d="M0.5 6h15" stroke="#1b2a4a" stroke-width="1.1" stroke-dasharray="3 1.2"/><path d="M0.5 9.5h8M0.5 12h6M0.5 14.5h6" stroke="#1b2a4a" stroke-width="1.1" stroke-dasharray="4 1"/><circle cx="11" cy="11" r="2.8" fill="#fff" stroke="#4a4a4a" stroke-width="1.7"/><path d="M13.1 13.1 L16 16" stroke="#4a4a4a" stroke-width="2.2" stroke-linecap="round"/></svg>
<span class="t" style="left:1416.0px;top:120.0px;font-size:12px;line-height:16px;color:#33334a;letter-spacing:-0.39px;">Linetypes...</span>
<svg style="left:1492.3px;top:75.5px" width="16" height="16" viewBox="0 0 16 16"><path d="M1 12 L5.6 0.8 H7.6 L12 12 H9.6 L8.6 9.2 H4.4 L3.4 12 Z M5.1 7.4 H7.9 L6.5 3.4 Z" fill="#214a9c"/><circle cx="10.8" cy="10.8" r="2.8" fill="#fff" stroke="#4a4a4a" stroke-width="1.7"/><path d="M12.9 12.9 L15.8 15.8" stroke="#4a4a4a" stroke-width="2.2" stroke-linecap="round"/></svg>
<span class="t" style="left:1511.0px;top:76.0px;font-size:12px;line-height:16px;color:#33334a;letter-spacing:-0.51px;">Explore Text Styles...</span>
<svg style="left:1492.3px;top:97.5px" width="16" height="16" viewBox="0 0 16 16"><path d="M1 0.8V11M15.5 0.8V11" stroke="#e01010" stroke-width="1.1"/><path d="M1 3.3h3.5M12 3.3h3.5" stroke="#e01010"/><path d="M1 3.3l2 -1.2v2.4ZM15.5 3.3l-2 -1.2v2.4Z" fill="#e01010"/><rect x="0.8" y="13" width="15" height="2.2" fill="#fff" stroke="#1b2a4a" stroke-width="1"/><circle cx="8" cy="3.6" r="2.6" fill="#fff" stroke="#4a4a4a" stroke-width="1.7"/><path d="M9.95 5.55 L12.8 8.4" stroke="#4a4a4a" stroke-width="2.2" stroke-linecap="round"/></svg>
<span class="t" style="left:1511.0px;top:98.0px;font-size:12px;line-height:16px;color:#33334a;letter-spacing:-0.37px;">Dimension Styles...</span>
<svg style="left:1492.3px;top:119.5px" width="16" height="16" viewBox="0 0 16 16"><path d="M2.5 15V1.5" stroke="#1c55b5" stroke-width="1.2"/><path d="M2.5 0l1.6 2.6h-3.2Z" fill="#1c55b5"/><path d="M2.5 14.5H15" stroke="#e01010" stroke-width="1.2"/><path d="M16 14.5l-2.6 1.6v-3.2Z" fill="#e01010"/><path d="M2.5 14.5L8 11" stroke="#1f9a3c" stroke-width="1.2"/><circle cx="10.5" cy="6.5" r="3" fill="#fff" stroke="#4a4a4a" stroke-width="1.7"/><path d="M12.75 8.75 L15.7 11.7" stroke="#4a4a4a" stroke-width="2.2" stroke-linecap="round"/></svg>
<span class="t" style="left:1511.0px;top:120.0px;font-size:12px;line-height:16px;color:#33334a;letter-spacing:-0.40px;">Coordinate Systems...</span>
<svg style="left:1628px;top:75.5px" width="16" height="16" viewBox="0 0 16 16"><path d="M0.8 5.5 C3 1.5 11 0.5 14.5 5.5 C11 10 4 10 0.8 5.5 Z" fill="#fff" stroke="#333" stroke-width="1.1"/><circle cx="7.6" cy="5" r="3.1" fill="#222"/><path d="M0.8 4.5 C4 0 12 0 14.8 4.8" fill="none" stroke="#333" stroke-width="1.8"/><circle cx="10.8" cy="10.8" r="2.8" fill="#fff" stroke="#4a4a4a" stroke-width="1.7"/><path d="M12.9 12.9 L15.8 15.8" stroke="#4a4a4a" stroke-width="2.2" stroke-linecap="round"/></svg>
<span class="t" style="left:1647.0px;top:76.0px;font-size:12px;line-height:16px;color:#33334a;letter-spacing:-0.39px;">Views...</span>
<svg style="left:1628px;top:97.5px" width="16" height="16" viewBox="0 0 16 16"><rect x="1" y="1.5" width="14" height="13.5" fill="#fff" stroke="#777"/><path d="M4.5 1.5v13M8 1.5v13M11.5 1.5v13M1 5h14M1 8.5h14" stroke="#aaa" stroke-width=".7"/><path d="M1 1.5 L14.5 15 H1 Z" fill="#7d86c8"/><path d="M3.5 8 L9 13.5 H3.5 Z" fill="#c8c8c8"/><circle cx="11" cy="10.8" r="2.8" fill="#fff" stroke="#4a4a4a" stroke-width="1.7"/><path d="M13.1 12.9 L16 15.8" stroke="#4a4a4a" stroke-width="2.2" stroke-linecap="round"/></svg>
<span class="t" style="left:1647.0px;top:98.0px;font-size:12px;line-height:16px;color:#33334a;letter-spacing:-0.40px;">Layouts...</span>
<svg style="left:1628px;top:119.5px" width="16" height="16" viewBox="0 0 16 16"><rect x="2.5" y="2" width="8.5" height="8.5" fill="#fff" stroke="#1b2a4a" stroke-width="1.1"/><rect x="6" y="5.5" width="8" height="8" fill="#f4f6fa" stroke="#1b2a4a" stroke-width="1.1"/><g fill="#fff" stroke="#2f6eb5" stroke-width=".8"><rect x="1" y="0.6" width="2" height="2"/><rect x="13.5" y="0.6" width="2" height="2"/><rect x="1" y="13.5" width="2" height="2"/></g><circle cx="11" cy="11" r="2.8" fill="#fff" stroke="#4a4a4a" stroke-width="1.7"/><path d="M13.1 13.1 L16 16" stroke="#4a4a4a" stroke-width="2.2" stroke-linecap="round"/></svg>
<span class="t" style="left:1647.0px;top:120.0px;font-size:12px;line-height:16px;color:#33334a;letter-spacing:-0.29px;">Groups...</span>
<svg style="left:1702.3px;top:75.5px" width="16" height="16" viewBox="0 0 16 16"><rect x="1.5" y="1" width="11" height="7" fill="#fff" stroke="#1b2a4a" stroke-width="1.1"/><circle cx="12" cy="7.5" r="3.6" fill="none" stroke="#1b2a4a" stroke-width="1"/><rect x="0.5" y="7" width="2" height="2" fill="#fff" stroke="#2f6eb5" stroke-width=".8"/><circle cx="10.8" cy="10.8" r="2.8" fill="#fff" stroke="#4a4a4a" stroke-width="1.7"/><path d="M12.9 12.9 L15.8 15.8" stroke="#4a4a4a" stroke-width="2.2" stroke-linecap="round"/></svg>
<span class="t" style="left:1721.0px;top:76.0px;font-size:12px;line-height:16px;color:#33334a;letter-spacing:-0.40px;">Blocks...</span>
<svg style="left:1702.3px;top:97.5px" width="16" height="16" viewBox="0 0 16 16"><rect x="1.5" y="2.5" width="13.5" height="13" fill="#fff" stroke="#999" stroke-width=".8"/><path d="M1 2.5h14.5" stroke="#2f6eb5" stroke-width="1.4"/><path d="M15.2 2v13.5" stroke="#2f6eb5" stroke-width="1.4"/><rect x="6.5" y="5" width="7" height="6" fill="#dbe9f7" stroke="#8aa" stroke-width=".6"/><path d="M3.5 2 a1.6 1.6 0 0 1 3.2 0 V7 a1.2 1.2 0 0 1 -2.4 0 V2.8" fill="none" stroke="#222" stroke-width="1"/><circle cx="9.5" cy="10.5" r="2.8" fill="#fff" stroke="#4a4a4a" stroke-width="1.7"/><path d="M11.6 12.6 L14.5 15.5" stroke="#4a4a4a" stroke-width="2.2" stroke-linecap="round"/></svg>
<span class="t" style="left:1721.0px;top:98.0px;font-size:12px;line-height:16px;color:#33334a;letter-spacing:-0.44px;">External References...</span>
<div style="left:1839px;top:70px;width:79.5px;height:88px;background:linear-gradient(#e3e7ee,#eef3f8 45%,#f3f8fb);border-radius:0 0 4px 0"></div>
<div style="left:2px;top:156.5px;width:1916px;height:1.5px;background:#fafbfd;border-radius:0 0 3px 3px"></div>
<div style="left:0px;top:158px;width:1920px;height:3.5px;background:linear-gradient(#9da1aa,#b4b8c1 40%,#cdd1da)"></div>
<div style="left:0px;top:162px;width:30px;height:752px;background:linear-gradient(90deg,#e3e7f1,#d3d8e5 70%,#c5cbda)"></div>
<svg style="left:0;top:160px" width="30" height="752" viewBox="0 160 30 752"><path d="M6.5 164.8h1.6M9.5 164.8h1.6M12.5 164.8h1.6M15.5 164.8h1.6M18.5 164.8h1.6" stroke="#9aa2b4" stroke-width="1.3"/><path d="M6.5 166h1.6M9.5 166h1.6M12.5 166h1.6M15.5 166h1.6M18.5 166h1.6" stroke="#fff" stroke-width="1"/><g transform="translate(6,173)"><path d="M3 14 L14 2.5" stroke="#1b2440" stroke-width="1.8"/><rect x="1.7" y="12.7" width="2.6" height="2.6" fill="#fff" stroke="#2a62b8" stroke-width=".8"/><rect x="12.7" y="1.2" width="2.6" height="2.6" fill="#fff" stroke="#2a62b8" stroke-width=".8"/><path d="M15 15 v-3 l-3 3 z" fill="#111"/></g><g transform="translate(6,195.5)"><path d="M6.5 2.5 C1 3 1 11 6.5 11.5 H13.5" fill="none" stroke="#1b2440" stroke-width="1.5"/><rect x="5.2" y="1.2" width="2.6" height="2.6" fill="#fff" stroke="#2a62b8" stroke-width=".8"/><rect x="5.2" y="10.2" width="2.6" height="2.6" fill="#fff" stroke="#2a62b8" stroke-width=".8"/><rect x="12.2" y="10.2" width="2.6" height="2.6" fill="#fff" stroke="#2a62b8" stroke-width=".8"/><path d="M16 15 v-3 l-3 3 z" fill="#111"/></g><g transform="translate(6,215.5)"><path d="M2 5.5 L11 14.5 M5.5 2 L14.5 11" stroke="#1b2440" stroke-width="2"/><rect x="3.7" y="0.2" width="2.6" height="2.6" fill="#fff" stroke="#2a62b8" stroke-width=".8"/><rect x="13.7" y="10.2" width="2.6" height="2.6" fill="#fff" stroke="#2a62b8" stroke-width=".8"/></g><g transform="translate(6,238.2)"><path d="M2 14.5 C2 6 6.5 10 8.5 8.5 C12 6.5 14.5 8 15 2" fill="none" stroke="#1b2440" stroke-width="1.8"/><rect x="0.7" y="13.2" width="2.6" height="2.6" fill="#fff" stroke="#2a62b8" stroke-width=".8"/><rect x="13.7" y="0.7" width="2.6" height="2.6" fill="#fff" stroke="#2a62b8" stroke-width=".8"/></g><g transform="translate(6,261)"><path d="M2 2.5 C7 4 0 10 4 13.5" fill="none" stroke="#1b2440" stroke-width="1.7"/><path d="M6 13 L13.5 5.5 L15.5 7.5 L8 15 Z" fill="#f2a33c"/><path d="M6 13 L5 16 L8 15Z" fill="#333"/></g><path d="M7 284.25h15" stroke="#a7aec0" stroke-width="1"/><path d="M7 285.25h15" stroke="#f5f7fb" stroke-width="1"/><g transform="translate(6,290.5)"><circle cx="8" cy="8.5" r="6.3" fill="#fff" stroke="#3c3c3c" stroke-width="1.4"/><path d="M8 8.5 L13 3.5" stroke="#2a62b8" stroke-width=".9" stroke-dasharray="1.5 1"/><path d="M8 7v3M6.5 8.5h3" stroke="#2a62b8" stroke-width=".9"/><rect x="11.7" y="2.2" width="2.6" height="2.6" fill="#fff" stroke="#2a62b8" stroke-width=".8"/><path d="M16 16 v-3 l-3 3 z" fill="#111"/></g><g transform="translate(6,312.5)"><path d="M2 14.5 C2 7 7 2.5 14.5 2.5" fill="none" stroke="#3c3c3c" stroke-width="1.6"/><rect x="0.7" y="13.2" width="2.6" height="2.6" fill="#fff" stroke="#2a62b8" stroke-width=".8"/><rect x="13.2" y="1.2" width="2.6" height="2.6" fill="#fff" stroke="#2a62b8" stroke-width=".8"/><rect x="4.7" y="4.2" width="2.6" height="2.6" fill="#fff" stroke="#2a62b8" stroke-width=".8"/><path d="M16 16 v-3 l-3 3 z" fill="#111"/></g><g transform="translate(6,333.9)"><ellipse cx="8" cy="8.5" rx="6.8" ry="4.6" fill="#fff" stroke="#3c3c3c" stroke-width="1.5"/><rect x="-0.1" y="7.2" width="2.6" height="2.6" fill="#fff" stroke="#2a62b8" stroke-width=".8"/><rect x="13.5" y="7.2" width="2.6" height="2.6" fill="#fff" stroke="#2a62b8" stroke-width=".8"/></g><g transform="translate(6,355.5)"><path d="M3 10 C1 3 14 1 14.5 8 C14.5 11 11 12.5 9.5 12" fill="none" stroke="#3c3c3c" stroke-width="1.5"/><rect x="1.7" y="8.7" width="2.6" height="2.6" fill="#fff" stroke="#2a62b8" stroke-width=".8"/><rect x="8.2" y="10.7" width="2.6" height="2.6" fill="#fff" stroke="#2a62b8" stroke-width=".8"/><path d="M16 16 v-3 l-3 3 z" fill="#111"/></g><path d="M7 379.5h15" stroke="#a7aec0" stroke-width="1"/><path d="M7 380.5h15" stroke="#f5f7fb" stroke-width="1"/><g transform="translate(6,386.5)"><rect x="6" y="6" width="3.4" height="3.4" fill="#fff" stroke="#222" stroke-width="1"/></g><path d="M7 409.8h15" stroke="#a7aec0" stroke-width="1"/><path d="M7 410.8h15" stroke="#f5f7fb" stroke-width="1"/><g transform="translate(6,416.1)"><rect x="2" y="4" width="13" height="9" fill="#fff" stroke="#1b2440" stroke-width="1.5"/><rect x="0.7" y="11.7" width="2.6" height="2.6" fill="#fff" stroke="#2a62b8" stroke-width=".8"/><rect x="13.7" y="2.7" width="2.6" height="2.6" fill="#fff" stroke="#2a62b8" stroke-width=".8"/></g><g transform="translate(6,438.2)"><path d="M2 4 L14 2 M2 7 L14 5 M2 10 L14 8 M2 13 L14 11 M2 16 L14 14" stroke="#333" stroke-width="2"/></g><g transform="translate(6,460.5)"><path d="M8.5 2 L15 7 L13 14.5 H4 L2 7 Z" fill="#fff" stroke="#1b2440" stroke-width="1.5"/><path d="M8.5 7v3M7 8.5h3" stroke="#2a62b8" stroke-width=".9"/><rect x="2.7" y="13.2" width="2.6" height="2.6" fill="#fff" stroke="#2a62b8" stroke-width=".8"/><path d="M16 16 v-3 l-3 3 z" fill="#111"/></g><g transform="translate(6,482.5)"><rect x="2" y="4.5" width="12" height="10" fill="#fff" stroke="#222" stroke-width="1.3"/><path d="M2 4 L5 1 M5 4 L8 1 M8 4 L11 1 M11 4 L14 1 M14 5 L16 3 M2 16.5 L4 14.5 M5 16.5 L7 14.5 M8 16.5 L10 14.5 M11 16.5 L13 14.5" stroke="#333" stroke-width=".9"/><rect x="8" y="2.5" width="5" height="5" fill="#fff" stroke="#222"/></g><g transform="translate(6,505.1)"><path d="M4 5 C5 1 10 2 10.5 4 C14 3 16 7 13.5 9.5 C15 13 10.5 15.5 8 13.5 C5 16 0.5 12.5 3 9.5 C1 8 2 5 4 5 Z" fill="#fff" stroke="#1b2440" stroke-width="1.4"/></g><path d="M7 528.05h15" stroke="#a7aec0" stroke-width="1"/><path d="M7 529.05h15" stroke="#f5f7fb" stroke-width="1"/><g transform="translate(6,534)"><circle cx="8" cy="8" r="6.5" fill="#fff" stroke="#3c3c3c" stroke-width="1.4"/><circle cx="8" cy="8" r="2.4" fill="#fff" stroke="#3c3c3c" stroke-width="1.3"/></g><g transform="translate(6,555.5)"><path d="M1.5 2 H14 V10.5 H6.5 L14.5 15" fill="none" stroke="#333" stroke-width="1.4"/><path d="M1.5 2 V10.5 H6.5" fill="none" stroke="#333" stroke-width="1.4"/><rect x="2.2" y="2.7" width="11" height="7" fill="#fff"/><path d="M6 13h7" stroke="#999" stroke-width="1"/></g><g transform="translate(6,578.5)"><path d="M3 15 V8 C3 4 6 2.5 9 2.5 H15 M7 15 V9 C7 7.5 8 6.5 9.5 6.5 H15" fill="none" stroke="#3c3c3c" stroke-width="1.6"/></g><path d="M7 602h15" stroke="#a7aec0" stroke-width="1"/><path d="M7 603h15" stroke="#f5f7fb" stroke-width="1"/><g transform="translate(6,608.5)"><rect x="2.5" y="3" width="10.5" height="8" fill="#fff" stroke="#1b2440" stroke-width="1.2"/><circle cx="11.5" cy="11" r="3.8" fill="#fff" stroke="#333" stroke-width="1"/><rect x="1.2" y="8.2" width="2.6" height="2.6" fill="#fff" stroke="#2a62b8" stroke-width=".8"/></g><path d="M7 632h15" stroke="#a7aec0" stroke-width="1"/><path d="M7 633h15" stroke="#f5f7fb" stroke-width="1"/><g transform="translate(6,638.5)"><rect x="2.5" y="3.5" width="12" height="10" fill="#ddd" stroke="#222" stroke-width="1.2"/><path d="M2.5 8 L7 3.5 M2.5 13 L12 3.5 M6 13.5 L14.5 5 M10.5 13.5 L14.5 9.5" stroke="#222" stroke-width="1"/><path d="M1 3.5h2M1 13.5h2M14 3.5h2.5M14 13.5h2.5M2.5 1.5v2M14.5 1.5v2M2.5 14v2M14.5 14v2" stroke="#222" stroke-width=".9"/></g><g transform="translate(6,660.2)"><path d="M2 13.5 L7 1 H9.2 L14.2 13.5 H11.6 L10.4 10.3 H5.6 L4.5 13.5 Z M6.4 8.2 H9.7 L8.05 3.6 Z" fill="#214a9c"/><path d="M1 15.8h14.5" stroke="#1b2440" stroke-width="1.3"/></g><g transform="translate(6,681.9)"><path d="M2 14.5 L7 2 H9.2 L14.2 14.5 H11.6 L10.4 11.3 H5.6 L4.5 14.5 Z M6.4 9.2 H9.7 L8.05 4.6 Z" fill="#214a9c"/></g><path d="M6.5 718.5h1.6M9.5 718.5h1.6M12.5 718.5h1.6M15.5 718.5h1.6M18.5 718.5h1.6" stroke="#9aa2b4" stroke-width="1.3"/><path d="M27.5 712v12" stroke="#f5f7fb" stroke-width="1"/><g transform="translate(6,726.5)"><path d="M2 9 A6 6 0 0 1 12.5 4.5" fill="none" stroke="#1c55b5" stroke-width="2.4"/><path d="M9.5 1 L15.5 3.5 L11 8 Z" fill="#1c55b5"/><path d="M14.5 8 A6 6 0 0 1 4 12.5" fill="none" stroke="#1c55b5" stroke-width="2.4"/><path d="M7 16 L1 13.5 L5.5 9 Z" fill="#1c55b5"/></g><path d="M7 749.5h15" stroke="#a7aec0" stroke-width="1"/><path d="M7 750.5h15" stroke="#f5f7fb" stroke-width="1"/><g transform="translate(6,755.5)"><path d="M4 9 V4.5 a1 1 0 0 1 2 0 V3 a1 1 0 0 1 2 0 V3.5 a1 1 0 0 1 2 0 V4.5 a1 1 0 0 1 2 0 V11 C12 14 10.5 15.5 8 15.5 C5 15.5 4.5 14 2 10.5 C1.5 9.3 3 8.7 4 10 Z" fill="#fff" stroke="#444" stroke-width="1"/><path d="M6 4.5v4M8 3.5v5M10 4.5v4" stroke="#444" stroke-width=".7"/><rect x="5.5" y="11" width="3.5" height="2.6" fill="#cfe2f7" stroke="#2a62b8" stroke-width=".6"/></g><g transform="translate(6,778)"><circle cx="7" cy="7" r="5.3" fill="#fff" stroke="#3c3c3c" stroke-width="1.5"/><path d="M11 11 L15 15" stroke="#3c3c3c" stroke-width="2.4" stroke-linecap="round"/><path d="M7 3.8V7H10" fill="none" stroke="#2a62b8" stroke-width="1.2"/></g><g transform="translate(6,800.5)"><circle cx="7" cy="7" r="5.3" fill="#fff" stroke="#3c3c3c" stroke-width="1.5"/><path d="M11 11 L15 15" stroke="#3c3c3c" stroke-width="2.4" stroke-linecap="round"/><path d="M3.5 9.5 V5 L5.5 6.5 A3.5 3.5 0 0 1 10.5 7.5 L8.5 8.5 A1.8 1.8 0 0 0 6.5 8 L8 9.5 Z" fill="#1c55b5"/></g><g transform="translate(6,821.5)"><circle cx="7" cy="7" r="5.3" fill="#fff" stroke="#3c3c3c" stroke-width="1.5"/><path d="M11 11 L15 15" stroke="#3c3c3c" stroke-width="2.4" stroke-linecap="round"/><rect x="4" y="4.5" width="6" height="5" fill="#eee" stroke="#444" stroke-width="1"/><path d="M5 6h4M5 8h3" stroke="#666" stroke-width=".6"/></g><g transform="translate(6,843.5)"><circle cx="7" cy="7" r="5.3" fill="#fff" stroke="#3c3c3c" stroke-width="1.5"/><path d="M3.2 11.2 L0.8 15.2" stroke="#3c3c3c" stroke-width="2.4" stroke-linecap="round"/><path d="M4.5 9.5 L9.5 4.5 M6.5 4.5 H9.5 V7.5" fill="none" stroke="#1c55b5" stroke-width="1.3"/></g><g transform="translate(6,866)"><circle cx="7" cy="7" r="5.3" fill="#fff" stroke="#3c3c3c" stroke-width="1.5"/><path d="M11 11 L15 15" stroke="#3c3c3c" stroke-width="2.4" stroke-linecap="round"/><circle cx="7" cy="7" r="3.8" fill="#1c55b5"/><path d="M7 4.5v5M4.5 7h5" stroke="#fff" stroke-width="1.4"/></g><g transform="translate(6,887.5)"><circle cx="7" cy="7" r="5.3" fill="#fff" stroke="#3c3c3c" stroke-width="1.5"/><path d="M11 11 L15 15" stroke="#3c3c3c" stroke-width="2.4" stroke-linecap="round"/><rect x="4" y="4" width="6" height="6" fill="#1c55b5"/></g></svg>
<div style="left:29px;top:161.5px;width:335px;height:751px;background:#f1f2f1;border-radius:4px 0 0 0"></div>
<div style="left:29px;top:161.5px;width:335px;height:21.5px;background:linear-gradient(#a6a6a6,#9a9a9a);border-radius:3px 0 0 0"></div>
<div style="left:362px;top:161px;width:4px;height:752px;background:#6f6f6f"></div>
<div style="left:31px;top:183px;width:331px;height:1px;background:#fafafa"></div>
<svg style="left:31px;top:164px" width="5" height="17"><g fill="#222"><rect x="1" y="1" width="1" height="1"/><rect x="1" y="3" width="1" height="1"/><rect x="1" y="5" width="1" height="1"/><rect x="1" y="7" width="1" height="1"/><rect x="1" y="9" width="1" height="1"/><rect x="1" y="11" width="1" height="1"/><rect x="1" y="13" width="1" height="1"/><rect x="1" y="15" width="1" height="1"/><rect x="3" y="1" width="1" height="1"/><rect x="3" y="3" width="1" height="1"/><rect x="3" y="5" width="1" height="1"/><rect x="3" y="7" width="1" height="1"/><rect x="3" y="9" width="1" height="1"/><rect x="3" y="11" width="1" height="1"/><rect x="3" y="13" width="1" height="1"/><rect x="3" y="15" width="1" height="1"/></g></svg>
<span class="t b" style="left:41.2px;top:163.0px;font-size:14.5px;line-height:19px;color:#000;letter-spacing:-0.17px;">Property</span>
<div style="left:45px;top:195px;width:229px;height:21px;box-sizing:border-box;background:#e6e6e6;border:1px solid #b2b2b2"></div>
<span class="t" style="left:49.0px;top:197.5px;font-size:11.5px;line-height:16px;color:#000;letter-spacing:-0.32px;">No selection</span>
<svg style="left:259px;top:201px" width="12" height="9"><path d="M1.5 2 L6 6.5 L10.5 2" fill="none" stroke="#333" stroke-width="1.1"/></svg>
<div style="left:278.3px;top:193px;width:23.5px;height:23.5px;box-sizing:border-box;background:linear-gradient(#f4f4f4,#dcdcdc);border:1px solid #a8a8a8"></div>
<svg style="left:278.3px;top:193px" width="23" height="23" viewBox="0 0 23 23"><rect x="4.5" y="4.5" width="14" height="14" fill="none" stroke="#1c2a8a" stroke-width="1" stroke-dasharray="1 1"/><rect x="6.5" y="6.5" width="10" height="10" fill="#e6eefc" stroke="#1c2a8a" stroke-width=".8" stroke-dasharray="1 1"/><path d="M11.5 8v7M8 11.5h7" stroke="#2a8a3a" stroke-width="1.4"/></svg>
<div style="left:304.3px;top:193px;width:23.5px;height:23.5px;box-sizing:border-box;background:linear-gradient(#f4f4f4,#dcdcdc);border:1px solid #a8a8a8"></div>
<svg style="left:304.3px;top:193px" width="23" height="23" viewBox="0 0 23 23"><ellipse cx="10.5" cy="12" rx="6.5" ry="6" fill="#ddd" stroke="#555" stroke-width="1" stroke-dasharray="2 1"/><rect x="11" y="4" width="6" height="3" fill="#4a9a4a"/><path d="M12 9 L12 18 L14.3 15.8 L16 19.5 L17.3 19 L15.7 15.3 L18.5 15 Z" fill="#fff" stroke="#222" stroke-width=".8"/></svg>
<div style="left:330.3px;top:193px;width:23.5px;height:23.5px;box-sizing:border-box;background:linear-gradient(#f4f4f4,#dcdcdc);border:1px solid #a8a8a8"></div>
<svg style="left:330.3px;top:193px" width="23" height="23" viewBox="0 0 23 23"><path d="M4 5 H17 L12.5 11 V18 L9 16 V11 Z" fill="#3d78c8" stroke="#1c3a78" stroke-width=".9"/><ellipse cx="10.5" cy="5" rx="6.5" ry="1.8" fill="#9cc2ee" stroke="#1c3a78" stroke-width=".8"/><path d="M17 8 L13 14 H16 L13.5 20 L20 12.5 H16.8 L19.5 8 Z" fill="#f5b52e" stroke="#b4791a" stroke-width=".5"/></svg>
<div style="left:31px;top:224px;width:10px;height:682px;background:#ababab"></div>
<div style="left:32px;top:876px;width:8px;height:30px;background:#e4e4e4;border:1px solid #c8c8c8;box-sizing:border-box"></div>
<div style="left:45px;top:224px;width:310px;height:19px;background:linear-gradient(#c6c6c6,#b2b2b2 45%,#9c9c9c);border-bottom:1px solid #868686;box-sizing:border-box"></div>
<span class="t b" style="left:52.0px;top:225.5px;font-size:12.75px;line-height:16px;color:#000;letter-spacing:-0.64px;">General</span>
<svg style="left:340px;top:230px" width="10" height="6"><path d="M0.5 5.5 L5 0.5 L9.5 5.5 Z" fill="#000"/></svg>
<div style="left:60px;top:243px;width:295px;height:18px;box-sizing:border-box;border:1px solid #868686;border-top:none;background:linear-gradient(90deg,#efefef 146px,#868686 146px,#868686 147px,#fff 147px)"></div>
<span class="t" style="left:66.0px;top:242.5px;font-size:11.3px;line-height:16px;color:#000;letter-spacing:-0.30px;">Color</span>
<div style="left:212px;top:246px;width:11px;height:11px;box-sizing:border-box;border:1px solid #000;background:#fff"></div>
<span class="t" style="left:228.0px;top:243.5px;font-size:11.3px;line-height:16px;color:#000;letter-spacing:-0.30px;">ByLayer</span>
<div style="left:60px;top:261px;width:295px;height:18px;box-sizing:border-box;border:1px solid #868686;border-top:none;background:linear-gradient(90deg,#efefef 146px,#868686 146px,#868686 147px,#fff 147px)"></div>
<span class="t" style="left:66.0px;top:260.5px;font-size:11.3px;line-height:16px;color:#000;letter-spacing:-0.30px;">Layer</span>
<span class="t" style="left:212.5px;top:260.5px;font-size:11.3px;line-height:16px;color:#000;letter-spacing:-0.30px;">0</span>
<div style="left:60px;top:279px;width:295px;height:18px;box-sizing:border-box;border:1px solid #868686;border-top:none;background:linear-gradient(90deg,#efefef 146px,#868686 146px,#868686 147px,#fff 147px)"></div>
<span class="t" style="left:66.0px;top:278.5px;font-size:11.3px;line-height:16px;color:#000;letter-spacing:-0.30px;">Linetype</span>
<div style="left:212.5px;top:288px;width:32px;height:1px;background:#000"></div>
<span class="t" style="left:249.0px;top:279.5px;font-size:11.3px;line-height:16px;color:#000;letter-spacing:-0.30px;">ByLayer</span>
<div style="left:60px;top:297px;width:295px;height:18px;box-sizing:border-box;border:1px solid #868686;border-top:none;background:linear-gradient(90deg,#efefef 146px,#868686 146px,#868686 147px,#fff 147px)"></div>
<span class="t" style="left:66.0px;top:296.5px;font-size:11.3px;line-height:16px;color:#000;letter-spacing:-0.30px;">Linetype scale</span>
<span class="t" style="left:212.5px;top:296.5px;font-size:11.3px;line-height:16px;color:#000;letter-spacing:-0.30px;">1.0000</span>
<div style="left:60px;top:315px;width:295px;height:18px;box-sizing:border-box;border:1px solid #868686;border-top:none;background:linear-gradient(90deg,#efefef 146px,#868686 146px,#868686 147px,#fff 147px)"></div>
<span class="t" style="left:66.0px;top:314.5px;font-size:11.3px;line-height:16px;color:#000;letter-spacing:-0.30px;">Lineweight</span>
<div style="left:212.5px;top:324px;width:32px;height:1px;background:#000"></div>
<span class="t" style="left:249.0px;top:315.5px;font-size:11.3px;line-height:16px;color:#000;letter-spacing:-0.30px;">ByLayer</span>
<div style="left:60px;top:333px;width:295px;height:18px;box-sizing:border-box;border:1px solid #868686;border-top:none;background:linear-gradient(90deg,#efefef 146px,#868686 146px,#868686 147px,#fff 147px)"></div>
<span class="t" style="left:66.0px;top:332.5px;font-size:11.3px;line-height:16px;color:#000;letter-spacing:-0.30px;">Thickness</span>
<span class="t" style="left:212.5px;top:332.5px;font-size:11.3px;line-height:16px;color:#000;letter-spacing:-0.30px;">0</span>
<div style="left:60px;top:351px;width:295px;height:18px;box-sizing:border-box;border:1px solid #868686;border-top:none;background:linear-gradient(90deg,#efefef 146px,#868686 146px,#868686 147px,#fff 147px)"></div>
<span class="t" style="left:66.0px;top:350.5px;font-size:11.3px;line-height:16px;color:#000;letter-spacing:-0.30px;">Transparency</span>
<span class="t" style="left:212.5px;top:350.5px;font-size:11.3px;line-height:16px;color:#000;letter-spacing:-0.30px;">ByLayer</span>
<div style="left:45px;top:372px;width:310px;height:19px;background:linear-gradient(#c6c6c6,#b2b2b2 45%,#9c9c9c);border-bottom:1px solid #868686;box-sizing:border-box"></div>
<span class="t b" style="left:52.0px;top:373.5px;font-size:13px;line-height:16px;color:#000;letter-spacing:-0.57px;">3D Visualisation</span>
<svg style="left:340px;top:378px" width="10" height="6"><path d="M0.5 5.5 L5 0.5 L9.5 5.5 Z" fill="#000"/></svg>
<div style="left:60px;top:391px;width:295px;height:18px;box-sizing:border-box;border:1px solid #868686;border-top:none;background:linear-gradient(90deg,#efefef 146px,#868686 146px,#868686 147px,#fff 147px)"></div>
<span class="t" style="left:66.0px;top:390.5px;font-size:11.3px;line-height:16px;color:#000;letter-spacing:-0.30px;">Material</span>
<span class="t" style="left:212.5px;top:390.5px;font-size:11.3px;line-height:16px;color:#000;letter-spacing:-0.30px;">ByLayer</span>
<div style="left:60px;top:409px;width:295px;height:18px;box-sizing:border-box;border:1px solid #868686;border-top:none;background:linear-gradient(90deg,#efefef 146px,#868686 146px,#868686 147px,#efefef 147px)"></div>
<span class="t" style="left:66.0px;top:408.5px;font-size:11.3px;line-height:16px;color:#000;letter-spacing:-0.30px;">Shadow display</span>
<span class="t" style="left:212.5px;top:408.5px;font-size:11.3px;line-height:16px;color:#000;letter-spacing:-0.30px;">Shadows cast and received</span>
<div style="left:45px;top:430px;width:310px;height:19px;background:linear-gradient(#c6c6c6,#b2b2b2 45%,#9c9c9c);border-bottom:1px solid #868686;box-sizing:border-box"></div>
<span class="t b" style="left:52.0px;top:431.5px;font-size:13px;line-height:16px;color:#000;letter-spacing:-0.58px;">Plot style</span>
<svg style="left:340px;top:436px" width="10" height="6"><path d="M0.5 5.5 L5 0.5 L9.5 5.5 Z" fill="#000"/></svg>
<div style="left:60px;top:449px;width:295px;height:18px;box-sizing:border-box;border:1px solid #868686;border-top:none;background:linear-gradient(90deg,#efefef 146px,#868686 146px,#868686 147px,#efefef 147px)"></div>
<span class="t" style="left:66.0px;top:448.5px;font-size:11.3px;line-height:16px;color:#000;letter-spacing:-0.30px;">Print style</span>
<span class="t" style="left:212.5px;top:448.5px;font-size:11.3px;line-height:16px;color:#000;letter-spacing:-0.30px;">ByColor</span>
<div style="left:60px;top:467px;width:295px;height:18px;box-sizing:border-box;border:1px solid #868686;border-top:none;background:linear-gradient(90deg,#efefef 146px,#868686 146px,#868686 147px,#fff 147px)"></div>
<span class="t" style="left:66.0px;top:466.5px;font-size:11.3px;line-height:16px;color:#000;letter-spacing:-0.30px;">Print style table</span>
<span class="t" style="left:212.5px;top:466.5px;font-size:11.3px;line-height:16px;color:#000;letter-spacing:-0.30px;">None</span>
<div style="left:60px;top:485px;width:295px;height:18px;box-sizing:border-box;border:1px solid #868686;border-top:none;background:linear-gradient(90deg,#efefef 146px,#868686 146px,#868686 147px,#efefef 147px)"></div>
<span class="t" style="left:66.0px;top:484.5px;font-size:11.3px;line-height:16px;color:#000;letter-spacing:-0.30px;">Print table attached to</span>
<span class="t" style="left:212.5px;top:484.5px;font-size:11.3px;line-height:16px;color:#000;letter-spacing:-0.30px;">Model</span>
<div style="left:60px;top:503px;width:295px;height:18px;box-sizing:border-box;border:1px solid #868686;border-top:none;background:linear-gradient(90deg,#efefef 146px,#868686 146px,#868686 147px,#efefef 147px)"></div>
<span class="t" style="left:66.0px;top:502.5px;font-size:11.3px;line-height:16px;color:#000;letter-spacing:-0.30px;">Print table type</span>
<span class="t" style="left:212.5px;top:502.5px;font-size:11.3px;line-height:16px;color:#000;letter-spacing:-0.30px;">Color-dependent print style</span>
<div style="left:45px;top:524px;width:310px;height:19px;background:linear-gradient(#c6c6c6,#b2b2b2 45%,#9c9c9c);border-bottom:1px solid #868686;box-sizing:border-box"></div>
<span class="t b" style="left:52.0px;top:525.5px;font-size:13px;line-height:16px;color:#000;letter-spacing:-0.60px;">View</span>
<svg style="left:340px;top:530px" width="10" height="6"><path d="M0.5 5.5 L5 0.5 L9.5 5.5 Z" fill="#000"/></svg>
<div style="left:60px;top:543px;width:295px;height:18px;box-sizing:border-box;border:1px solid #868686;border-top:none;background:linear-gradient(90deg,#efefef 146px,#868686 146px,#868686 147px,#efefef 147px)"></div>
<span class="t" style="left:66.0px;top:542.5px;font-size:11.3px;line-height:16px;color:#000;letter-spacing:-0.30px;">Center X</span>
<span class="t" style="left:212.5px;top:542.5px;font-size:11.3px;line-height:16px;color:#000;letter-spacing:-0.30px;">-5.0204</span>
<div style="left:60px;top:561px;width:295px;height:18px;box-sizing:border-box;border:1px solid #868686;border-top:none;background:linear-gradient(90deg,#efefef 146px,#868686 146px,#868686 147px,#efefef 147px)"></div>
<span class="t" style="left:66.0px;top:560.5px;font-size:11.3px;line-height:16px;color:#000;letter-spacing:-0.30px;">Center Y</span>
<span class="t" style="left:212.5px;top:560.5px;font-size:11.3px;line-height:16px;color:#000;letter-spacing:-0.30px;">-4.0421</span>
<div style="left:60px;top:579px;width:295px;height:18px;box-sizing:border-box;border:1px solid #868686;border-top:none;background:linear-gradient(90deg,#efefef 146px,#868686 146px,#868686 147px,#efefef 147px)"></div>
<span class="t" style="left:66.0px;top:578.5px;font-size:11.3px;line-height:16px;color:#000;letter-spacing:-0.30px;">Center Z</span>
<span class="t" style="left:212.5px;top:578.5px;font-size:11.3px;line-height:16px;color:#000;letter-spacing:-0.30px;">0</span>
<div style="left:60px;top:597px;width:295px;height:18px;box-sizing:border-box;border:1px solid #868686;border-top:none;background:linear-gradient(90deg,#efefef 146px,#868686 146px,#868686 147px,#efefef 147px)"></div>
<span class="t" style="left:66.0px;top:596.5px;font-size:11.3px;line-height:16px;color:#000;letter-spacing:-0.30px;">Width</span>
<span class="t" style="left:212.5px;top:596.5px;font-size:11.3px;line-height:16px;color:#000;letter-spacing:-0.30px;">45.0457</span>
<div style="left:60px;top:615px;width:295px;height:18px;box-sizing:border-box;border:1px solid #868686;border-top:none;background:linear-gradient(90deg,#efefef 146px,#868686 146px,#868686 147px,#efefef 147px)"></div>
<span class="t" style="left:66.0px;top:614.5px;font-size:11.3px;line-height:16px;color:#000;letter-spacing:-0.30px;">Height</span>
<span class="t" style="left:212.5px;top:614.5px;font-size:11.3px;line-height:16px;color:#000;letter-spacing:-0.30px;">21.7105</span>
<div style="left:45px;top:636px;width:310px;height:19px;background:linear-gradient(#c6c6c6,#b2b2b2 45%,#9c9c9c);border-bottom:1px solid #868686;box-sizing:border-box"></div>
<span class="t b" style="left:52.0px;top:637.5px;font-size:12.75px;line-height:16px;color:#000;letter-spacing:-0.59px;">Misc</span>
<svg style="left:340px;top:642px" width="10" height="6"><path d="M0.5 5.5 L5 0.5 L9.5 5.5 Z" fill="#000"/></svg>
<div style="left:60px;top:655px;width:295px;height:18px;box-sizing:border-box;border:1px solid #868686;border-top:none;background:linear-gradient(90deg,#efefef 146px,#868686 146px,#868686 147px,#fff 147px)"></div>
<span class="t" style="left:66.0px;top:654.5px;font-size:11.3px;line-height:16px;color:#000;letter-spacing:-0.30px;">Annotation scale</span>
<span class="t" style="left:212.5px;top:654.5px;font-size:11.3px;line-height:16px;color:#000;letter-spacing:-0.30px;">1:1</span>
<div style="left:60px;top:673px;width:295px;height:18px;box-sizing:border-box;border:1px solid #868686;border-top:none;background:linear-gradient(90deg,#efefef 146px,#868686 146px,#868686 147px,#fff 147px)"></div>
<span class="t" style="left:66.0px;top:672.5px;font-size:11.3px;line-height:16px;color:#000;letter-spacing:-0.30px;">UCS icon On</span>
<span class="t" style="left:212.5px;top:672.5px;font-size:11.3px;line-height:16px;color:#000;letter-spacing:-0.30px;">Yes</span>
<div style="left:60px;top:691px;width:295px;height:18px;box-sizing:border-box;border:1px solid #868686;border-top:none;background:linear-gradient(90deg,#efefef 146px,#868686 146px,#868686 147px,#fff 147px)"></div>
<span class="t" style="left:66.0px;top:690.5px;font-size:11.3px;line-height:16px;color:#000;letter-spacing:-0.30px;">UCS icon at origin</span>
<span class="t" style="left:212.5px;top:690.5px;font-size:11.3px;line-height:16px;color:#000;letter-spacing:-0.30px;">Yes</span>
<div style="left:60px;top:709px;width:295px;height:18px;box-sizing:border-box;border:1px solid #868686;border-top:none;background:linear-gradient(90deg,#efefef 146px,#868686 146px,#868686 147px,#fff 147px)"></div>
<span class="t" style="left:66.0px;top:708.5px;font-size:11.3px;line-height:16px;color:#000;letter-spacing:-0.30px;">UCS per viewport</span>
<span class="t" style="left:212.5px;top:708.5px;font-size:11.3px;line-height:16px;color:#000;letter-spacing:-0.30px;">Yes</span>
<div style="left:60px;top:727px;width:295px;height:18px;box-sizing:border-box;border:1px solid #868686;border-top:none;background:linear-gradient(90deg,#efefef 146px,#868686 146px,#868686 147px,#efefef 147px)"></div>
<span class="t" style="left:66.0px;top:726.5px;font-size:11.3px;line-height:16px;color:#000;letter-spacing:-0.30px;">UCS Name</span>
<span class="t" style="left:212.5px;top:726.5px;font-size:11.3px;line-height:16px;color:#000;letter-spacing:-0.30px;">* WORLD *</span>
<div style="left:60px;top:745px;width:295px;height:18px;box-sizing:border-box;border:1px solid #868686;border-top:none;background:linear-gradient(90deg,#efefef 146px,#868686 146px,#868686 147px,#fff 147px)"></div>
<span class="t" style="left:66.0px;top:744.5px;font-size:11.3px;line-height:16px;color:#000;letter-spacing:-0.30px;">Visual style</span>
<span class="t" style="left:212.5px;top:744.5px;font-size:11.3px;line-height:16px;color:#000;letter-spacing:-0.30px;">2D Wireframe</span>
<div style="left:60px;top:763px;width:295px;height:18px;box-sizing:border-box;border:1px solid #868686;border-top:none;background:linear-gradient(90deg,#efefef 146px,#868686 146px,#868686 147px,#fff 147px)"></div>
<span class="t" style="left:66.0px;top:762.5px;font-size:11.3px;line-height:16px;color:#000;letter-spacing:-0.30px;">Set PICKADD</span>
<span class="t" style="left:212.5px;top:762.5px;font-size:11.3px;line-height:16px;color:#000;letter-spacing:-0.30px;">Yes</span>
<div style="left:60px;top:781px;width:295px;height:18px;box-sizing:border-box;border:1px solid #868686;border-top:none;background:linear-gradient(90deg,#efefef 146px,#868686 146px,#868686 147px,#fff 147px)"></div>
<span class="t" style="left:66.0px;top:780.5px;font-size:11.3px;line-height:16px;color:#000;letter-spacing:-0.30px;">Set PICKAUTO</span>
<span class="t" style="left:212.5px;top:780.5px;font-size:11.3px;line-height:16px;color:#000;letter-spacing:-0.30px;">Yes</span>
<div style="left:60px;top:799px;width:295px;height:18px;box-sizing:border-box;border:1px solid #868686;border-top:none;background:linear-gradient(90deg,#efefef 146px,#868686 146px,#868686 147px,#fff 147px)"></div>
<span class="t" style="left:66.0px;top:798.5px;font-size:11.3px;line-height:16px;color:#000;letter-spacing:-0.30px;">Set PICKBOX</span>
<span class="t" style="left:212.5px;top:798.5px;font-size:11.3px;line-height:16px;color:#000;letter-spacing:-0.30px;">3</span>
<div style="left:60px;top:817px;width:295px;height:18px;box-sizing:border-box;border:1px solid #868686;border-top:none;background:linear-gradient(90deg,#efefef 146px,#868686 146px,#868686 147px,#fff 147px)"></div>
<span class="t" style="left:66.0px;top:816.5px;font-size:11.3px;line-height:16px;color:#000;letter-spacing:-0.30px;">Set PICKDRAG</span>
<span class="t" style="left:212.5px;top:816.5px;font-size:11.3px;line-height:16px;color:#000;letter-spacing:-0.30px;">No</span>
<div style="left:60px;top:835px;width:295px;height:18px;box-sizing:border-box;border:1px solid #868686;border-top:none;background:linear-gradient(90deg,#efefef 146px,#868686 146px,#868686 147px,#fff 147px)"></div>
<span class="t" style="left:66.0px;top:834.5px;font-size:11.3px;line-height:16px;color:#000;letter-spacing:-0.30px;">Set PICKFIRST</span>
<span class="t" style="left:212.5px;top:834.5px;font-size:11.3px;line-height:16px;color:#000;letter-spacing:-0.30px;">Yes</span>
<div style="left:60px;top:853px;width:295px;height:18px;box-sizing:border-box;border:1px solid #868686;border-top:none;background:linear-gradient(90deg,#efefef 146px,#868686 146px,#868686 147px,#fff 147px)"></div>
<span class="t" style="left:66.0px;top:852.5px;font-size:11.3px;line-height:16px;color:#000;letter-spacing:-0.30px;">Global linetype scale</span>
<span class="t" style="left:212.5px;top:852.5px;font-size:11.3px;line-height:16px;color:#000;letter-spacing:-0.30px;">1.0000</span>
<div style="left:60px;top:871px;width:295px;height:18px;box-sizing:border-box;border:1px solid #868686;border-top:none;background:linear-gradient(90deg,#efefef 146px,#868686 146px,#868686 147px,#fff 147px)"></div>
<span class="t" style="left:66.0px;top:870.5px;font-size:11.3px;line-height:16px;color:#000;letter-spacing:-0.30px;">Cursor size</span>
<span class="t" style="left:212.5px;top:870.5px;font-size:11.3px;line-height:16px;color:#000;letter-spacing:-0.30px;">5</span>
<div style="left:60px;top:889px;width:295px;height:18px;box-sizing:border-box;border:1px solid #868686;border-top:none;background:linear-gradient(90deg,#efefef 146px,#868686 146px,#868686 147px,#fff 147px)"></div>
<span class="t" style="left:66.0px;top:888.5px;font-size:11.3px;line-height:16px;color:#000;letter-spacing:-0.30px;">Fill area</span>
<span class="t" style="left:212.5px;top:888.5px;font-size:11.3px;line-height:16px;color:#000;letter-spacing:-0.30px;">Yes</span>
<div style="left:60px;top:907px;width:295px;height:4px;box-sizing:border-box;border:1px solid #868686;border-top:none;border-bottom:none;background:linear-gradient(90deg,#efefef 146px,#868686 146px,#868686 147px,#fff 147px)"></div>
<div style="left:366px;top:161px;width:1525px;height:734.5px;background:#000"></div>
<svg style="left:0;top:0" width="1920" height="1040" viewBox="0 0 1920 1040" shape-rendering="crispEdges"><defs><clipPath id="vp"><rect x="366" y="161" width="1525" height="734.5"/></clipPath></defs><g clip-path="url(#vp)">
<polygon fill="#78493a" points="366,540 457.5,611 457.5,706 422.5,680 366,636"/>
<polygon fill="#8e5a48" points="457.5,611 546,640 546,646 587,672 587,750.5 457.5,706"/>
<polygon fill="#9a6350" points="587,672 600,680 722.5,729 840,760.5 945,785.7 945,827.8 840,810 587,750.5"/>
<polygon fill="#a06450" points="945,785.7 1320,873.75 1440,889 1440,895.5 1352.5,895.5 1320,891.25 945,827.8"/>
<polygon fill="#78493a" points="1440,889 1891,775 1891,875 1577.5,895.5 1440,895.5"/>
<polygon fill="#004800" points="366,451 610,479.5 700,490 1000,600 1400,560 1585,558.75 1670.75,530 1727,536 1799,536.5 1860,515 1891,523.75 1891,775 1440,889 1320,873.75 840,760.5 722.5,729 600,680 546,646 546,640 457.5,611 366,540"/>
<polygon fill="#003a00" points="366,451 610,479.5 640,490 640,605 558.75,600 558.75,626 546,632.5 457.5,601 457.5,611 366,540"/>
<polygon fill="#005000" points="457.5,601 546,632.5 546,640 457.5,611"/>
<polygon fill="#001400" points="546,632.5 558.75,626.25 546,646"/>
<polygon fill="#005200" points="558.75,626.25 642.5,680 722.5,729 600,680 546,646"/>
<polyline fill="none" stroke="#003800" stroke-width="1.2" points="558.75,626.25 642.5,680 722.5,729"/>
<polygon fill="#003e00" points="1799.3,532.7 1860,512 1891,521 1891,757 1540,729 1516.5,734.6"/>
<polygon fill="#004600" points="1800,537.5 1891,521 1891,650"/>
<polygon fill="#004c00" points="1540,729 1891,757 1891,775 1800,798"/>
<polygon fill="#003e00" points="1670.75,530 1727,536 1716,541 1500,697 1511,705 1400,693 1406,691 1585,558.75"/>
<polygon fill="#c8c8c8" points="366,416 441,388.75 443.75,388 608.75,407 621,408 621,487 610,479.5 366,451"/>
<polyline fill="none" stroke="#8c8238" stroke-width="1.2" points="443.75,388 608.75,407"/>
<polygon fill="#003a00" points="526,433 560,422 609,420 609,439.5"/>
<polygon fill="#004c00" points="560,422 609,420 609,431"/>
<polygon fill="#dcb868" points="408,358.5 413.75,357 413.75,397.2 408,397.8"/>
<polygon fill="#2e2516" points="413.75,357.3 443.75,348 443.75,388 413.75,397.5"/>
<polyline fill="none" stroke="#dcb868" stroke-width="1" points="408,358.8 413.75,357.3 443.75,348"/>
<polygon fill="#c8c8c8" points="610,479.5 640,492 640,577 410,550.5"/>
<polyline fill="none" stroke="#8c8c8c" stroke-width="1.2" points="410,550.8 626,575.3"/>
<polygon fill="#c8c8c8" points="512.5,597.5 582.5,571 640,577 640,606 560,604"/>
<polygon fill="#ffffff" points="602.25,366.25 609.4,365 609.4,407 602.25,406.25"/>
<polygon fill="#dcdcdc" points="609.4,349.4 615,348.3 621.25,349 621.25,443 609.4,440"/>
<polygon fill="#c8c8c8" points="621,480 1068,530 1360,565 1360,720 1306,724.5 827.25,669.5 898.75,643 858,638 858,634 780,626 635,610 621,608"/>
<polygon fill="#aaaaaa" points="635,602.5 689.5,584 982.5,617.75 921.25,635.6 780,619.4 635,603"/>
<polygon fill="#003a00" points="858,638 898.75,643 858,657.5"/>
<polygon fill="#dcdcdc" points="1068,536 1320,565 1480,583 1458,586 1364,620 1355,619 1320,612.5 1068,583"/>
<polygon fill="#aaaaaa" points="689.4,494.4 972.5,527.5 983.75,533.75 689.4,500.6"/>
<polygon fill="#844200" points="688.75,500.6 983.75,533.75 983.75,617.5 688.75,584"/>
<polygon fill="#2a1000" points="982.5,533.5 987,532.5 987,612 982.5,617.75"/>
<polygon fill="#262626" points="972.5,527.5 1068,538.75 1068,582.5 987,611 987,533"/>
<polyline fill="none" stroke="#b4b4b4" stroke-width="1" points="1000.75,531.83 1000.75,606.16"/>
<polyline fill="none" stroke="#b4b4b4" stroke-width="1" points="1025.5,534.74 1025.5,597.45"/>
<polyline fill="none" stroke="#b4b4b4" stroke-width="1" points="1048,537.39 1048,589.54"/>
<polyline fill="none" stroke="#8c8c8c" stroke-width="1" points="987,611 1068,582.5"/>
<polygon fill="#aaaaaa" points="626.25,512.5 681.25,493.5 689.4,494.4 635.6,513"/>
<polygon fill="#dcdcdc" points="626.25,512.5 635.4,513 635.4,603 626.25,602"/>
<polygon fill="#2b2b2b" points="635.25,513 689.4,494.4 689.4,584 635.25,602.8"/>
<polygon fill="#ffffff" points="558.75,596 853.75,630 853.75,662.5 558.75,626.25"/>
<polygon fill="#333333" points="853.75,629.4 857.75,629.6 857.75,658 853.75,662.5"/>
<polygon fill="#ffffff" points="1047,638 1355,673.75 1355,683 1047,648.75"/>
<polygon fill="#333333" points="976.25,662.5 1047,638 1047,649 1000,665"/>
<polygon fill="#15202c" points="1000,665.2 1047,648.75 1047,663.75 1030,669.5"/>
<polygon fill="#6b9fd4" points="1047,648.75 1355,683 1355,692 1330.5,692 1330.5,694.8 1325,696.25 1047,663.75"/>
<polygon fill="#4a76a8" points="1030,669.5 1047,663.75 1325,696 1312.5,701.75"/>
<polygon fill="#ffffff" points="827.25,669 1306,723.75 1306,734.5 827.25,678.75"/>
<polygon fill="#333333" points="1306,723.75 1330.5,716 1330.5,726 1306,734.5"/>
<polygon fill="#2b2b2b" points="1379,620.25 1476.25,586.25 1476.25,583 1502.5,586 1537,566 1556,566 1585,558.75 1408,692.5 1379,692"/>
<polygon fill="#aaaaaa" points="1355,618 1357.5,617.3 1451.25,583.75 1476.25,586.25 1379,621"/>
<polygon fill="#dcdcdc" points="1355,617.5 1379,620.25 1379,692 1355,690"/>
<polygon fill="#c8c8c8" points="1670.6,461.25 1891,485.6 1891,523.75 1860,515 1860,510 1670.6,488"/>
<polyline fill="none" stroke="#9a9a9a" stroke-width="1.3" points="1670.6,469.4 1891,495"/>
<polygon fill="#3a3a1e" points="1670.6,488 1860,510 1799.4,531.25 1670.6,515.6"/>
<polygon fill="#1e1408" points="1799.4,531.25 1860,510 1860,515 1799.4,536.25"/>
<polygon fill="#ffffff" points="1670.6,515.6 1799.4,531.25 1799.4,537.5 1740,533.5 1727.5,536.25 1670.6,530"/>
<polygon fill="#333333" points="1775.4,547.1 1798.75,537 1775.4,553.7"/>
<polygon fill="#c8c8c8" points="1716.2,540.8 1740,532.5 1798.75,537 1775.4,547.1"/>
<polygon fill="#ffffff" points="1716.2,540.8 1775.4,547.1 1775.4,553.5 1716.2,547.2"/>
<polygon fill="#333333" points="1756.9,560.4 1775.4,553.5 1756.9,567"/>
<polygon fill="#c8c8c8" points="1697.7,554.1 1716.2,547.2 1775.4,553.5 1756.9,560.4"/>
<polygon fill="#ffffff" points="1697.7,554.1 1756.9,560.4 1756.9,566.8 1697.7,560.5"/>
<polygon fill="#333333" points="1738.4,573.7 1756.9,566.8 1738.4,580.3"/>
<polygon fill="#c8c8c8" points="1679.2,567.4 1697.7,560.5 1756.9,566.8 1738.4,573.7"/>
<polygon fill="#ffffff" points="1679.2,567.4 1738.4,573.7 1738.4,580.1 1679.2,573.8"/>
<polygon fill="#333333" points="1719.9,587 1738.4,580.1 1719.9,593.6"/>
<polygon fill="#c8c8c8" points="1660.7,580.7 1679.2,573.8 1738.4,580.1 1719.9,587"/>
<polygon fill="#ffffff" points="1660.7,580.7 1719.9,587 1719.9,593.4 1660.7,587.1"/>
<polygon fill="#333333" points="1701.4,600.3 1719.9,593.4 1701.4,606.9"/>
<polygon fill="#c8c8c8" points="1642.2,594 1660.7,587.1 1719.9,593.4 1701.4,600.3"/>
<polygon fill="#ffffff" points="1642.2,594 1701.4,600.3 1701.4,606.7 1642.2,600.4"/>
<polygon fill="#333333" points="1682.9,613.6 1701.4,606.7 1682.9,620.2"/>
<polygon fill="#c8c8c8" points="1623.7,607.3 1642.2,600.4 1701.4,606.7 1682.9,613.6"/>
<polygon fill="#ffffff" points="1623.7,607.3 1682.9,613.6 1682.9,620 1623.7,613.7"/>
<polygon fill="#333333" points="1664.4,626.9 1682.9,620 1664.4,633.5"/>
<polygon fill="#c8c8c8" points="1605.2,620.6 1623.7,613.7 1682.9,620 1664.4,626.9"/>
<polygon fill="#ffffff" points="1605.2,620.6 1664.4,626.9 1664.4,633.3 1605.2,627"/>
<polygon fill="#333333" points="1645.9,640.2 1664.4,633.3 1645.9,646.8"/>
<polygon fill="#c8c8c8" points="1586.7,633.9 1605.2,627 1664.4,633.3 1645.9,640.2"/>
<polygon fill="#ffffff" points="1586.7,633.9 1645.9,640.2 1645.9,646.6 1586.7,640.3"/>
<polygon fill="#333333" points="1627.4,653.5 1645.9,646.6 1627.4,660.1"/>
<polygon fill="#c8c8c8" points="1568.2,647.2 1586.7,640.3 1645.9,646.6 1627.4,653.5"/>
<polygon fill="#ffffff" points="1568.2,647.2 1627.4,653.5 1627.4,659.9 1568.2,653.6"/>
<polygon fill="#333333" points="1608.9,666.8 1627.4,659.9 1608.9,673.4"/>
<polygon fill="#c8c8c8" points="1549.7,660.5 1568.2,653.6 1627.4,659.9 1608.9,666.8"/>
<polygon fill="#ffffff" points="1549.7,660.5 1608.9,666.8 1608.9,673.2 1549.7,666.9"/>
<polygon fill="#333333" points="1590.4,680.1 1608.9,673.2 1590.4,686.7"/>
<polygon fill="#c8c8c8" points="1531.2,673.8 1549.7,666.9 1608.9,673.2 1590.4,680.1"/>
<polygon fill="#ffffff" points="1531.2,673.8 1590.4,680.1 1590.4,686.5 1531.2,680.2"/>
<polygon fill="#333333" points="1571.9,693.4 1590.4,686.5 1571.9,700"/>
<polygon fill="#c8c8c8" points="1512.7,687.1 1531.2,680.2 1590.4,686.5 1571.9,693.4"/>
<polygon fill="#ffffff" points="1512.7,687.1 1571.9,693.4 1571.9,699.8 1512.7,693.5"/>
<polygon fill="#333333" points="1553.4,706.7 1571.9,699.8 1553.4,713.3"/>
<polygon fill="#c8c8c8" points="1494.2,700.4 1512.7,693.5 1571.9,699.8 1553.4,706.7"/>
<polygon fill="#ffffff" points="1494.2,700.4 1553.4,706.7 1553.4,713.1 1494.2,706.8"/>
<polygon fill="#333333" points="1534.9,720 1553.4,713.1 1534.9,726.6"/>
<polygon fill="#c8c8c8" points="1475.7,713.7 1494.2,706.8 1553.4,713.1 1534.9,720"/>
<polygon fill="#ffffff" points="1475.7,713.7 1534.9,720 1534.9,726.4 1475.7,720.1"/>
<polygon fill="#333333" points="1516.4,733.3 1534.9,726.4 1516.4,739.9"/>
<polygon fill="#c8c8c8" points="1457.2,727 1475.7,720.1 1534.9,726.4 1516.4,733.3"/>
<polygon fill="#ffffff" points="1457.2,727 1516.4,733.3 1516.4,739.7 1457.2,733.4"/>
<polygon fill="#333333" points="1511,705 1516,706 1516,747 1511,752"/>
<polygon fill="#ffffff" points="1331,686 1511,705 1511,752 1331,727.5"/>
<polyline fill="none" stroke="#c8c8c8" stroke-width="1" points="1331,686 1511,705"/>
<polygon fill="#ffffff" points="1330.5,686 1331.5,686 1331.5,727.5 1330.5,726"/>
<polygon fill="#333333" points="1555,427.5 1670.6,387 1670.6,530 1585,558.75 1555,570"/>
<polygon fill="#969696" points="621.25,343.5 676.7,327 923.3,240 1275.6,277.5 1275.6,341.1 1670.6,387 1502.25,446"/>
<polygon fill="#333333" points="1202.5,303 1275.6,277.5 1275.6,340.6 1202,332"/>
<polygon fill="#ffffff" points="935,238.5 1275.6,277.5 1241,285 935,253.75"/>
<polygon fill="#d2d2d2" points="1241,285 1275.6,277.5 1275.6,279.5 1205,303.5 1202,301"/>
<polygon fill="#333333" points="637.5,342.75 680.8,327.5 680.8,339.4 666.25,345.6"/>
<polygon fill="#d2d2d2" points="621.25,343.5 676.7,324.4 684.2,324.6 684.2,327.2 680.8,327.4 637.5,343.2 630,345"/>
<polygon fill="#333333" points="690,327.5 935,240 935.8,253.75 690,340.4"/>
<polygon fill="#d2d2d2" points="684.2,325 923.3,238.3 935.5,238.8 935.5,239.8 690,327.3 684.2,327.6"/>
<polygon fill="#ffffff" points="680.8,327.1 690,327.3 690,340.8 680.8,339.5"/>
<polygon fill="#ffffff" points="1177.5,329.75 1670.6,387 1627.5,397.5 1177.5,345"/>
<polygon fill="#d2d2d2" points="1627.5,397.5 1657.5,386 1670.6,387 1555,427.5 1552,425"/>
<polygon fill="#ffffff" points="1528.75,424.4 1552.5,425.6 1555,427.5 1555,570.5 1537.5,568.5 1537.5,435 1528.75,432.5"/>
<polygon fill="#333333" points="1502.25,446.25 1538,434.7 1538,576 1502.5,588.75"/>
<polygon fill="#ffffff" points="1505,433 1536.5,434.6 1502.25,446"/>
<polyline fill="none" stroke="#d2d2d2" stroke-width="1" points="1502.25,446 1537,434.8"/>
<polygon fill="#ffffff" points="1202,303 1192,302 1192,331 1202,332"/>
<polygon fill="#333333" points="1127,331 1192,308 1192,330.6 1175,328.75 1158.75,335 1158.75,338 1127,336.3"/>
<polygon fill="#ffffff" points="1118,330 1127,331 1127,336.3 1158.75,338 1158.75,335 1168,335 1168,348.75 1118,342.5"/>
<polygon fill="#d2d2d2" points="1158.75,335 1175,328.75 1177.5,329.75 1168,335.2"/>
<polygon fill="#333333" points="1168,335 1177.5,332 1177.5,345 1168,348.75"/>
<polygon fill="#d2d2d2" points="1118,330 1190,304.5 1192,308 1127,331"/>
<polygon fill="#ffffff" points="1157,305 1180,307.5 1157,315.5"/>
<polygon fill="#ffffff" points="1170,300 1202,303.5 1192,306.5 1170,304.5"/>
<polygon fill="#333333" points="1194,296.5 1228.5,284.5 1228.5,289 1200,299"/>
<polygon fill="#d2d2d2" points="1182,298.5 1230,282.5 1232,284 1190,299"/>
<polygon fill="#333333" points="982.5,316.9 1019.4,302.5 1019.4,320.6 997.5,319.4"/>
<polygon fill="#ffffff" points="975,316.9 997.5,319.4 997.5,325 975,326.25"/>
<polygon fill="#d2d2d2" points="975,316.9 1019.4,301.5 1020,303 982.5,317.4"/>
<polygon fill="#333333" points="1043,303.5 1082.5,288.75 1100.6,290.6 1100.6,303.75 1087.5,308.75"/>
<polygon fill="#ffffff" points="1068.75,293.75 1082.5,288.75 1082.5,293.75 1068.75,298.5"/>
<polygon fill="#d2d2d2" points="1043,303.5 1082,288.25 1101,290.3 1060,305.6 1057,305"/>
<polygon fill="#333333" points="1046.5,303.4 1069,294.6 1069,300 1058,304.6"/>
<polygon fill="#ffffff" points="1069,294.2 1082.5,289.2 1082.5,294.4 1069,299.8"/>
<polygon fill="#333333" points="1074,291.6 1082.5,288.9 1082.5,293.4"/>
<polygon fill="#ffffff" points="997.5,319.4 1019.4,320.6 1013.75,322.6 997.5,325"/>
<polygon fill="#ffffff" points="1020,302.25 1096.25,310 1054.4,325.6 1054.4,338.75 1013.75,335 1013.75,321.9 1020,320.6"/>
<polygon fill="#333333" points="1054.4,325.6 1096.9,310.25 1096.9,323.75 1054.4,338.75"/>
<polygon fill="#ffffff" points="950,334.75 970,336.9 970,350 950,347.75"/>
<polygon fill="#333333" points="970,336.9 1013.75,321.9 1013.75,335 970,350"/>
<polygon fill="#333333" points="959.4,333.75 997.5,320 997.5,325 971.25,335.6"/>
<polygon fill="#d2d2d2" points="950,334.75 997.5,318.5 997.5,320.4 959.4,334.2"/>
<polygon fill="#d2d2d2" points="970,336.9 1013.75,321.2 1013.75,322.6 971,337.6"/>
<polygon fill="#ffffff" points="780,348 975,370 948.75,380 780,360"/>
<polygon fill="#333333" points="757,357 779.4,348.75 779.4,359.4"/>
<polygon fill="#333333" points="950.6,379.75 977.5,370 977.5,383"/>
<polygon fill="#d2d2d2" points="757,356.5 779,347.3 781,348 759,357"/>
<polygon fill="#ffffff" points="621.25,343.5 1502.25,446 1502.5,482.5 1057,431.25 1028.25,428 1028.25,517 1502.5,571 1502.5,588.75 1068,538.75 689.4,494.4 621.25,487"/>
<polyline fill="none" stroke="#d2d2d2" stroke-width="1.4" points="621.25,344 1502.25,446.5"/>
<polygon fill="#333333" points="1028.25,428 1057,431.25 1057,506.25 1028.25,517"/>
<polygon fill="#c8c8c8" points="1057,431.25 1502.5,482.5 1502.5,557.5 1057,506.25"/>
<polygon fill="#969696" points="1028.25,517 1057,506.25 1502.5,557.5 1502.5,571"/>
<polyline fill="none" stroke="#a8a8a8" stroke-width="1" points="1112.5,437.63 1112.5,512.63"/>
<polyline fill="none" stroke="#a8a8a8" stroke-width="1" points="1168,444.01 1168,519.01"/>
<polyline fill="none" stroke="#2a2a2a" stroke-width="1" points="1223,450.34 1223,525.34"/>
<polyline fill="none" stroke="#aaaaaa" stroke-width="8" points="1281.5,457.07 1281.5,532.07"/>
<polyline fill="none" stroke="#a8a8a8" stroke-width="1" points="1340,463.8 1340,538.79"/>
<polyline fill="none" stroke="#2a2a2a" stroke-width="1" points="1395.5,470.18 1395.5,545.18"/>
<polyline fill="none" stroke="#2a2a2a" stroke-width="1" points="1450.5,476.5 1450.5,551.5"/>
<polyline fill="none" stroke="#0000ff" stroke-width="1" points="405.5,850 405.5,790"/>
<polygon fill="none" points="405.5,769 399,789.5 412.5,789.5" stroke="#0000ff" stroke-width="1"/>
<ellipse cx="405.7" cy="789.5" rx="6.8" ry="1.6" fill="none" stroke="#0000ff" stroke-width="1"/>
<polyline fill="none" stroke="#00dc00" stroke-width="1" points="405.5,850 432,840"/>
<ellipse cx="436" cy="838.5" rx="5.5" ry="6.8" fill="none" stroke="#00dc00" stroke-width="1" transform="rotate(20 436 838.5)"/>
<polyline fill="none" stroke="#00dc00" stroke-width="1" points="438,832 447,836.5 439,845"/>
<polyline fill="none" stroke="#ff0000" stroke-width="1" points="405.5,850 457.5,856"/>
<polyline fill="none" stroke="#ff0000" stroke-width="1" points="459,849.5 477.5,858 457,863"/>
<ellipse cx="457.8" cy="856.3" rx="2" ry="6.8" fill="none" stroke="#ff0000" stroke-width="1"/>
<ellipse cx="405" cy="850.5" rx="8.5" ry="1.8" fill="none" stroke="#ffffff" stroke-width="1"/>
<text x="400" y="756" fill="#fff" font-size="18.5" font-family="'Liberation Sans',sans-serif" stroke="#000" stroke-width="0.5">Z</text>
<text x="451" y="839.5" fill="#fff" font-size="18.5" font-family="'Liberation Sans',sans-serif" stroke="#000" stroke-width="0.5">Y</text>
<text x="490" y="867" fill="#fff" font-size="18.5" font-family="'Liberation Sans',sans-serif" stroke="#000" stroke-width="0.5">X</text>
<polyline fill="none" stroke="#0000ff" stroke-width="1" points="1277.5,842.5 1277.5,895"/>
<polyline fill="none" stroke="#ff0000" stroke-width="1" points="1233.75,887.5 1302.5,895"/>
<polyline fill="none" stroke="#00dc00" stroke-width="1" points="1270,895 1301,884.5"/>
<rect x="1274.5" y="889.5" width="6" height="6" fill="none" stroke="#ff00ff" stroke-width="1"/>
</g></svg>
<div style="left:366px;top:895.5px;width:1525px;height:17.5px;background:#eff1f0"></div>
<svg style="left:366px;top:895px" width="260" height="18" viewBox="366 895 260 18"><rect x="367.5" y="896" width="15.5" height="16" fill="#f0f0f0" stroke="#b4b4b4" stroke-width="1"/><rect x="383" y="896" width="15.5" height="16" fill="#f0f0f0" stroke="#b4b4b4" stroke-width="1"/><rect x="398.5" y="896" width="15.5" height="16" fill="#f0f0f0" stroke="#b4b4b4" stroke-width="1"/><rect x="414" y="896" width="15.5" height="16" fill="#f0f0f0" stroke="#b4b4b4" stroke-width="1"/><path d="M370.5 899.5v9" stroke="#000" stroke-width="1.3"/><path d="M378 899.5 L372.5 904 L378 908.5Z" fill="#000"/><path d="M393 899.5 L387.5 904 L393 908.5Z" fill="#000"/><path d="M403.5 899.5 L409 904 L403.5 908.5Z" fill="#000"/><path d="M418.5 899.5 L424 904 L418.5 908.5Z" fill="#000"/><path d="M426 899.5v9" stroke="#000" stroke-width="1.3"/><path d="M431 896 L437.5 911.5 H477.5 L484 896 Z" fill="#fff"/><path d="M431 896 L437.5 911.5 H477.5 L484.5 895.5" fill="none" stroke="#000" stroke-width="1"/><path d="M480 901.5 L485.8 911.5 H536.5 L542 896.3" fill="none" stroke="#000" stroke-width="1"/><path d="M538.3 901.5 L544.2 911.5 H595 L602.5 896.3" fill="none" stroke="#000" stroke-width="1"/></svg>
<span class="t b" style="left:441.5px;top:895.8px;font-size:12px;line-height:16px;color:#000;letter-spacing:-0.33px;">Model</span>
<span class="t" style="left:492.0px;top:895.8px;font-size:12px;line-height:16px;color:#000;letter-spacing:-0.45px;">Layout1</span>
<span class="t" style="left:551.0px;top:895.8px;font-size:12px;line-height:16px;color:#000;letter-spacing:-0.45px;">Layout2</span>
<div style="left:1891px;top:161.5px;width:29px;height:752px;background:linear-gradient(90deg,#eef1f8,#dde1ec 50%,#cfd4e1)"></div>
<div style="left:1891px;top:161.5px;width:29px;height:23px;background:#cdd1db"></div>
<div style="left:1891px;top:895.5px;width:29px;height:18px;background:#cdd1db"></div>
<svg style="left:1890px;top:160px" width="30" height="752" viewBox="1890 160 30 752"><path d="M1898.5 188h1.6M1901.5 188h1.6M1904.5 188h1.6M1907.5 188h1.6M1910.5 188h1.6" stroke="#9aa2b4" stroke-width="1.3"/><g transform="translate(1897.5,194)"><rect x="2" y="3" width="6" height="5" fill="#fff" stroke="#666" stroke-width="1"/><rect x="9" y="9.5" width="6" height="5" fill="#fff" stroke="#1b2440" stroke-width="1.3"/><path d="M9.5 4.5 h3.5 v3" fill="none" stroke="#d01010" stroke-width="1"/><path d="M13 9l-1.6 -2.2h3.2Z" fill="#d01010"/></g><g transform="translate(1897.5,215.9)"><rect x="1.5" y="2" width="5.5" height="5" fill="#fff" stroke="#1b2440" stroke-width="1.2"/><rect x="7" y="7" width="5.5" height="5" fill="#fff" stroke="#1b2440" stroke-width="1.2"/><rect x="10" y="10.5" width="5.5" height="5" fill="#fff" stroke="#1b2440" stroke-width="1.2"/><path d="M8.5 3.5 h3.5 v2.5" fill="none" stroke="#d01010" stroke-width="1"/><path d="M12 8l-1.6 -2.2h3.2Z" fill="#d01010"/></g><g transform="translate(1897.5,239.5)"><path d="M2 15 V9 H6 V6 C6 2 13 2 13 6 V9 H15 M2 15 H15 V12 M5 13 V11.5 H8.5 V7 C8.5 5 11 5 11 7 V9" fill="none" stroke="#1b2440" stroke-width="1.3"/></g><g transform="translate(1897.5,261.5)"><rect x="2" y="2" width="13" height="13" fill="none" stroke="#888" stroke-width="1" stroke-dasharray="2.5 1.5"/><rect x="2" y="9" width="6" height="6" fill="#fff" stroke="#1b2440" stroke-width="1.3"/></g><path d="M1898 285.2h16" stroke="#a7aec0" stroke-width="1"/><path d="M1898 286.2h16" stroke="#f8f9fc" stroke-width="1"/><g transform="translate(1897.5,291.9)"><path d="M2.5 5 V8.5 A6 6 0 0 0 14.5 8.5 V5" fill="none" stroke="#1c55b5" stroke-width="2.2"/><path d="M11.5 5.5 L14.5 1 L17.5 5.5 Z" fill="#1c55b5"/><path d="M8.5 6v4M6.5 8h4" stroke="#d01010" stroke-width="1.1"/></g><g transform="translate(1897.5,312.5)"><path d="M8.5 0.5 V16" stroke="#d01010" stroke-width="1" stroke-dasharray="3 1.5"/><path d="M2.5 7.5 C2.5 14 14.5 14 14.5 7.5" fill="none" stroke="#1c55b5" stroke-width="2.2"/><path d="M0 8.5 L2.5 4 L5.5 8.5 Z" fill="#1c55b5"/></g><path d="M1898 336.5h16" stroke="#a7aec0" stroke-width="1"/><path d="M1898 337.5h16" stroke="#f8f9fc" stroke-width="1"/><g transform="translate(1897.5,343.5)"><path d="M7 3 V14 H1.5 Z" fill="#fff" stroke="#222" stroke-width="1.1"/><path d="M10 3 V14 H15.5 Z" fill="#ccc" stroke="#222" stroke-width="1.1"/><path d="M8.5 0.5 V16.5" stroke="#d01010" stroke-width="1" stroke-dasharray="3 1.5"/></g><g transform="translate(1897.5,365.5)"><path d="M5 3.5 L8 14 H1.5 Z" fill="#bfe3c8" stroke="#1f7a3a" stroke-width="1.1"/><path d="M12 3.5 L15.5 14 H9 Z" fill="#bfe3c8" stroke="#1f7a3a" stroke-width="1.1"/><path d="M8.5 3 L11.5 14 H5.5 Z" fill="#e9f6ec" stroke="#1f7a3a" stroke-width="1"/><path d="M3 3.5 C1.5 6 2 9 4.5 10.5" fill="none" stroke="#d01010" stroke-width="1.3"/><path d="M5.5 11.8 L2.6 11.2 L4.5 8.8Z" fill="#d01010"/></g><path d="M1898 389.25h16" stroke="#a7aec0" stroke-width="1"/><path d="M1898 390.25h16" stroke="#f8f9fc" stroke-width="1"/><g transform="translate(1897.5,396)"><rect x="4" y="4" width="9" height="9" fill="none" stroke="#666" stroke-width=".9" stroke-dasharray="1.5 1.5"/><g fill="#1c55b5"><rect x="2.5" y="2.5" width="3" height="3"/><rect x="11.5" y="2.5" width="3" height="3"/><rect x="2.5" y="11.5" width="3" height="3"/><rect x="11.5" y="11.5" width="3" height="3"/></g></g><g transform="translate(1897.5,416.5)"><g fill="#1c55b5"><rect x="2" y="2" width="3" height="3"/><rect x="7" y="2" width="3" height="3"/><rect x="12" y="2" width="3" height="3"/><rect x="2" y="7" width="3" height="3"/><rect x="12" y="7" width="3" height="3"/><rect x="2" y="12" width="3" height="3"/><rect x="7" y="12" width="3" height="3"/><rect x="12" y="12" width="3" height="3"/></g><path d="M3.5 3.5h10v10h-10zM8.5 3.5v10M3.5 8.5h10" fill="none" stroke="#666" stroke-width=".8" stroke-dasharray="1.5 1.5"/></g><path d="M1898 440h16" stroke="#a7aec0" stroke-width="1"/><path d="M1898 441h16" stroke="#f8f9fc" stroke-width="1"/><g transform="translate(1897.5,446.5)"><rect x="2" y="5" width="12.5" height="9" fill="#fff" stroke="#1f7a3a" stroke-width="1.8"/><path d="M8 5 L11 1.5" stroke="#666" stroke-width="1"/></g><g transform="translate(1897.5,469)"><rect x="2" y="4.5" width="12.5" height="9" fill="#fff" stroke="#1f7a3a" stroke-width="1.8"/><path d="M4 4.5h8" stroke="#999" stroke-width="1.2"/></g><g transform="translate(1897.5,490.5)"><rect x="2" y="4.5" width="10" height="8.5" fill="#fff" stroke="#1f7a3a" stroke-width="1.8"/><path d="M9.5 0.5 V17" stroke="#333" stroke-width="1"/><path d="M12 4.5h3.5v8.5H12" fill="none" stroke="#999" stroke-width="1.2"/></g><path d="M1898 514h16" stroke="#a7aec0" stroke-width="1"/><path d="M1898 515h16" stroke="#f8f9fc" stroke-width="1"/><g transform="translate(1897.5,520.5)"><path d="M1.5 5.5 L5.5 1.5 H15.5 V11.5 L11.5 15.5 H1.5 Z" fill="#fff" stroke="#666" stroke-width="1"/><path d="M1.5 5.5 H11.5 V15.5 M11.5 5.5 L15.5 1.5" fill="none" stroke="#666" stroke-width="1"/><path d="M1.5 15.5 H11.5 L15.5 11.5" fill="none" stroke="#1b2440" stroke-width="1.4"/></g><path d="M1898 544.5h16" stroke="#a7aec0" stroke-width="1"/><path d="M1898 545.5h16" stroke="#f8f9fc" stroke-width="1"/><g transform="translate(1897.5,551.5)"><rect x="2" y="9" width="3.5" height="6.5" fill="#fff" stroke="#1b2440" stroke-width="1.1"/><rect x="11" y="1.5" width="4" height="14" fill="#fff" stroke="#1b2440" stroke-width="1.1"/><path d="M5.5 8.5 L10.5 2" stroke="#888" stroke-width=".8" stroke-dasharray="1.5 1.5"/></g><path d="M1898 575.3h16" stroke="#a7aec0" stroke-width="1"/><path d="M1898 576.3h16" stroke="#f8f9fc" stroke-width="1"/><g transform="translate(1897.5,582.1)"><path d="M2 14.5 L11 5.5" stroke="#1b2440" stroke-width="2"/><path d="M9 2.5 L15.5 9" stroke="#1b2440" stroke-width="2.4"/><path d="M3.5 15.5 L12.5 6.5" stroke="#aaa" stroke-width=".8" stroke-dasharray="1.5 1.5"/><path d="M16.5 16 v-3 l-3 3 z" fill="#111"/></g><path d="M1898 605.55h16" stroke="#a7aec0" stroke-width="1"/><path d="M1898 606.55h16" stroke="#f8f9fc" stroke-width="1"/><g transform="translate(1897.5,612)"><path d="M2 3v4M6.5 3v4M10.5 3v4M15 3v4" stroke="#1b2440" stroke-width="1"/><path d="M2 5h13" stroke="#1b2440" stroke-width="1" stroke-dasharray="2.5 1.5"/><path d="M1 8.5h15" stroke="#1b2440" stroke-width="1"/><path d="M1.5 14.5 L15.5 12 V15.5 H1.5 Z" fill="#f2a33c"/></g><path d="M1898 635.25h16" stroke="#a7aec0" stroke-width="1"/><path d="M1898 636.25h16" stroke="#f8f9fc" stroke-width="1"/><g transform="translate(1897.5,641.5)"><path d="M2 15.5 V9 C2 5 6 2 15 2 V15.5 Z" fill="#fff" stroke="#222" stroke-width="1.3"/><path d="M2 2.5h6M2 2.5v5" stroke="#999" stroke-width=".8" stroke-dasharray="1 1"/></g><path d="M1898 665.5h16" stroke="#a7aec0" stroke-width="1"/><path d="M1898 666.5h16" stroke="#f8f9fc" stroke-width="1"/><g transform="translate(1897.5,672.5)"><path d="M3 12 C1 6 5 5 8 8" fill="none" stroke="#1b2440" stroke-width="1.3"/><path d="M6 11 L13 4 L15 6 L8 13 Z" fill="#f2a33c"/><rect x="1.7" y="11.2" width="2.6" height="2.6" fill="#fff" stroke="#2a62b8" stroke-width=".8"/><rect x="7.7" y="12.2" width="2.6" height="2.6" fill="#fff" stroke="#2a62b8" stroke-width=".8"/></g><g transform="translate(1897.5,694.2)"><path d="M2 15 C2 9 6 11 8 8 C10 5 14 6 14.5 2" fill="none" stroke="#1b2440" stroke-width="1.8"/><path d="M5 11 L11 5 L13 7 L7 13 Z" fill="#f2a33c"/><rect x="0.7" y="13.7" width="2.6" height="2.6" fill="#fff" stroke="#2a62b8" stroke-width=".8"/><rect x="13.2" y="0.7" width="2.6" height="2.6" fill="#fff" stroke="#2a62b8" stroke-width=".8"/></g><g transform="translate(1897.5,715.1)"><path d="M1.5 13 L6 1.5 H8 L12.5 13 H10.2 L9.2 10.2 H4.8 L3.8 13 Z M5.5 8.3 H8.5 L7 4.1 Z" fill="#214a9c"/><path d="M8 14 L14 8 L16 10 L10 16 Z" fill="#f2a33c"/></g><path d="M1898 738.8h16" stroke="#a7aec0" stroke-width="1"/><path d="M1898 739.8h16" stroke="#f8f9fc" stroke-width="1"/><g transform="translate(1897.5,745.5)"><path d="M5 4 L14.5 13.5 L12 16 L2.5 6.5 Z" fill="#d01010" stroke="#8a0a0a" stroke-width=".6"/><path d="M1 2 L6 1 L7 5 L3 7 Z" fill="#f5c52e" stroke="#b48a1a" stroke-width=".5"/></g><g transform="translate(1897.5,766.2)"><path d="M4 6.5 L13 15.5 L10.5 17.5 L1.5 9 Z" fill="#d01010" stroke="#8a0a0a" stroke-width=".6"/><path d="M0.5 4.5 L5 3.5 L6 7.5 L2.5 9 Z" fill="#f5c52e" stroke="#b48a1a" stroke-width=".5"/><circle cx="12" cy="4.5" r="4" fill="#2fa56b"/><path d="M12 2.3v4.4M9.8 4.5h4.4" stroke="#fff" stroke-width="1.2"/></g><path d="M1898 789.85h16" stroke="#a7aec0" stroke-width="1"/><path d="M1898 790.85h16" stroke="#f8f9fc" stroke-width="1"/><g transform="translate(1897.5,796.5)"><rect x="1.5" y="7" width="8.5" height="8.5" fill="#fff" stroke="#999" stroke-width="1.1"/><rect x="6.5" y="1.5" width="9" height="9" fill="none" stroke="#1f7a3a" stroke-width="1.2"/></g><g transform="translate(1897.5,817.5)"><rect x="8" y="1.5" width="7.5" height="5" fill="#333"/><path d="M1.5 15.5 V8 L8.5 15.5 Z" fill="#fff" stroke="#1c55b5" stroke-width="1.3"/><path d="M5 8.5h4v6" fill="none" stroke="#999" stroke-width=".8" stroke-dasharray="1 1"/><path d="M5.5 8 V4.5 H8" fill="none" stroke="#d01010" stroke-width="1.1"/></g><rect x="1895.5" y="840.5" width="22" height="22" rx="2" fill="#fbdca0" stroke="#e3a64a" stroke-width="1"/><rect x="1896.5" y="841.5" width="20" height="8" rx="1.5" fill="#fdeccb"/><rect x="1899.5" y="844.5" width="14" height="14.5" fill="#fff" stroke="#777" stroke-width="1"/><rect x="1899" y="844" width="15" height="3" fill="#3a6ab0"/><circle cx="1903" cy="850.5" r="1.2" fill="#666"/><circle cx="1903" cy="855" r="1.2" fill="none" stroke="#666" stroke-width=".7"/><path d="M1906 850.5h5M1906 855h5" stroke="#666" stroke-width="1"/></svg>
<div style="left:0px;top:912.5px;width:1920px;height:5px;background:linear-gradient(#e2e5ea,#d3d7de 40%,#b4b9c3)"></div>
<div style="left:0px;top:917.3px;width:1920px;height:1.2px;background:#7a7a7a"></div>
<div style="left:0px;top:918.5px;width:1920px;height:101px;background:#d5d8e0"></div>
<div style="left:0px;top:918.5px;width:21px;height:78px;background:#d0d3db"></div>
<div style="left:21.5px;top:918.3px;width:1897px;height:78.2px;background:#fff;border-left:1px solid #828282;border-top:1px solid #828282;box-sizing:border-box"></div>
<div style="left:21.5px;top:996.5px;width:1897px;height:1px;background:#6e6e6e"></div>
<div style="left:21.5px;top:997.5px;width:1897px;height:19.5px;background:#fff;border-left:1px solid #828282;box-sizing:border-box"></div>
<span class="t m" style="left:22.7px;top:918.6px;font-size:13.33px;line-height:16px;color:#000;">Command:</span>
<span class="t m" style="left:22.7px;top:932.6px;font-size:13.33px;line-height:16px;color:#000;">Cancel</span>
<span class="t m" style="left:22.7px;top:946.6px;font-size:13.33px;line-height:16px;color:#000;">Command:</span>
<span class="t m" style="left:22.7px;top:960.6px;font-size:13.33px;line-height:16px;color:#000;">Cancel</span>
<span class="t m" style="left:22.7px;top:974.6px;font-size:13.33px;line-height:16px;color:#000;">Command: _SAVEAS</span>
<span class="t m cn" style="left:25.0px;top:998.0px;font-size:11.67px;line-height:16px;color:#000;">Command:</span>
<svg style="left:3px;top:919px" width="16" height="34"><path d="M3.5 2.5 L11.5 10.5 M11.5 2.5 L3.5 10.5" stroke="#777" stroke-width="1.1" fill="none"/><path d="M3 26 L12 26 L7.5 31 Z" fill="#8a8a8a"/></svg>
<div style="left:1902px;top:917.5px;width:16.5px;height:79px;background:#fff"></div>
<div style="left:1902.5px;top:962px;width:15px;height:18px;background:#cdcdcd"></div>
<svg style="left:1902px;top:918px" width="17" height="78"><path d="M4.5 8 L8.5 4 L12.5 8" fill="none" stroke="#404040" stroke-width="1.4"/><path d="M4.5 68.5 L8.5 72.5 L12.5 68.5" fill="none" stroke="#404040" stroke-width="1.4"/></svg>
<div style="left:0px;top:1018.5px;width:1920px;height:21.5px;background:linear-gradient(#d6d9e0 0,#c9cdd5 3px,#b9bdc7 60%,#a9aeb9 100%)"></div>
<span class="t" style="left:4.3px;top:1021.8px;font-size:11.75px;line-height:16px;color:#1a1a2a;letter-spacing:-0.65px;">Ready</span>
<svg style="left:1200px;top:1018px" width="720" height="22" viewBox="1200 1018 720 22"><path d="M1213.5 1020v19" stroke="#8f95a2" stroke-width="1"/><path d="M1214.5 1020v19" stroke="#e4e7ec" stroke-width="1"/><path d="M1223 1020v19" stroke="#8f95a2" stroke-width="1"/><path d="M1224 1020v19" stroke="#e4e7ec" stroke-width="1"/><path d="M1404 1020v19" stroke="#8f95a2" stroke-width="1"/><path d="M1405 1020v19" stroke="#e4e7ec" stroke-width="1"/><path d="M1452.5 1020v19" stroke="#8f95a2" stroke-width="1"/><path d="M1453.5 1020v19" stroke="#e4e7ec" stroke-width="1"/><path d="M1502 1020v19" stroke="#8f95a2" stroke-width="1"/><path d="M1503 1020v19" stroke="#e4e7ec" stroke-width="1"/><path d="M1513 1022 L1516 1031 L1520 1036 L1516.5 1034 L1513 1037 L1509.5 1034 L1506 1036 L1510 1031 Z" fill="#fff" stroke="#222" stroke-width="1"/><rect x="1545.5" y="1021" width="18" height="17.5" fill="#f2ef6e"/><rect x="1677" y="1021" width="18" height="17.5" fill="#f2ef6e"/><rect x="1699" y="1021" width="18" height="17.5" fill="#f2ef6e"/><rect x="1721" y="1021" width="18" height="17.5" fill="#f2ef6e"/><path d="M1551 1023 L1553.5 1030 L1557 1035 L1553.5 1033 L1551 1036 L1548.5 1033 L1546 1035 L1549 1030 Z" fill="#fff" stroke="#222" stroke-width=".9"/><circle cx="1558" cy="1030" r="3" fill="#fff7c0" stroke="#555" stroke-width=".9"/><path d="M1557 1033.5h2v2h-2z" fill="#777"/><path d="M1573.5 1023 L1576 1030 L1579.5 1035 L1576 1033 L1573.5 1036 L1571 1033 L1568.5 1035 L1571.5 1030 Z" fill="#fff" stroke="#222" stroke-width=".9"/><path d="M1577 1028 L1583 1022 L1584.5 1023.5 L1578.5 1029.5Z" fill="#e8a040"/><path d="M1580 1030l3 3" stroke="#2a62b8" stroke-width="1.2"/><rect x="1590.5" y="1022.5" width="15" height="15" fill="#eee" stroke="#555" stroke-width="1"/><path d="M1594 1022.5v15M1598 1022.5v15M1602 1022.5v15M1590.5 1026h15M1590.5 1030h15M1590.5 1034h15" stroke="#777" stroke-width=".7"/><rect x="1592" y="1028.5" width="5" height="4" fill="none" stroke="#e01010" stroke-width="1.2"/><rect x="1612.5" y="1022.5" width="15" height="15" fill="#ddd" stroke="#555" stroke-width="1"/><path d="M1615 1022.5v15M1617.5 1022.5v15M1620 1022.5v15M1622.500 1022.5v15M1625 1022.5v15M1612.5 1025h15M1612.5 1027.5h15M1612.5 1030h15M1612.5 1032.500h15M1612.5 1035h15" stroke="#666" stroke-width=".7"/><path d="M1636.5 1022V1036.5H1650" fill="none" stroke="#e01010" stroke-width="1.2"/><path d="M1636.5 1022v4" stroke="#2a9a3a" stroke-width="1.2"/><circle cx="1663.5" cy="1030" r="7.3" fill="none" stroke="#222" stroke-width="1.4"/><path d="M1663.5 1030 L1671.500 1022.500 M1663.5 1030h8" stroke="#e01010" stroke-width="1.1" fill="none"/><path d="M1686 1022v16M1678 1030h16" stroke="#222" stroke-width="1.2"/><circle cx="1686" cy="1030" r="1.6" fill="#fff" stroke="#e01010" stroke-width="1"/><path d="M1700 1037.500 L1716 1023 M1700 1037.500 h14" stroke="#222" stroke-width="1.3" fill="none"/><path d="M1708 1026 l5 8" stroke="#222" stroke-width="1"/><path d="M1730 1022v16M1722 1029.500h16" stroke="#111" stroke-width="1.8"/><g transform="translate(1828.5,1021.5)"><polygon points="13.94,7.22 15.90,7.25 15.87,9.94 13.91,9.92 13.11,11.80 14.47,13.20 12.55,15.08 11.18,13.68 9.28,14.44 9.25,16.40 6.56,16.37 6.58,14.41 4.70,13.61 3.30,14.97 1.42,13.05 2.82,11.68 2.06,9.78 0.10,9.75 0.13,7.06 2.09,7.08 2.89,5.20 1.53,3.80 3.45,1.92 4.82,3.32 6.72,2.56 6.75,0.60 9.44,0.63 9.42,2.59 11.30,3.39 12.70,2.03 14.58,3.95 13.18,5.32" fill="#1b63c6"/><circle cx="8" cy="8.5" r="2.3" fill="#bfc3cc"/></g><rect x="1853.500" y="1024.500" width="9" height="7" fill="#fff" stroke="#1b2a5a" stroke-width="1.300"/><rect x="1857.500" y="1029.500" width="9" height="7" fill="#fff" stroke="#1b2a5a" stroke-width="1.300"/><circle cx="1880.500" cy="1030" r="7.300" fill="#fff" stroke="#222" stroke-width="1.600"/><path d="M1877 1034.500 L1885 1025" stroke="#2a7ad0" stroke-width="1.600"/><rect x="1896.500" y="1024.500" width="14" height="10" fill="#f6c24a" stroke="#a87a1a" stroke-width="1"/><path d="M1896.500 1024.500 L1903.500 1030.500 L1910.500 1024.500" fill="none" stroke="#a87a1a" stroke-width="1"/></svg>
<span class="t" style="left:1228.0px;top:1021.8px;font-size:12px;line-height:16px;color:#1a1a2a;letter-spacing:-0.57px;">89.7838,-61.6150,0.0000</span>
<span class="t" style="left:1409.0px;top:1021.8px;font-size:10.5px;line-height:16px;color:#1a1a2a;letter-spacing:-1.02px;">BYLAYER</span>
<span class="t" style="left:1457.2px;top:1021.8px;font-size:12px;line-height:16px;color:#1a1a2a;letter-spacing:-0.59px;">OpenGL</span>
<span class="t" style="left:1525.5px;top:1021.8px;font-size:11.5px;line-height:16px;color:#1a1a2a;letter-spacing:-0.66px;">1:1</span>
<span class="t" style="left:1744.4px;top:1021.8px;font-size:11.25px;line-height:16px;color:#1a1a2a;letter-spacing:-0.58px;">MODEL</span>
<span class="t" style="left:1788.0px;top:1021.8px;font-size:10.5px;line-height:16px;color:#9aa0aa;letter-spacing:-0.82px;">TABLET</span>
</body></html>
